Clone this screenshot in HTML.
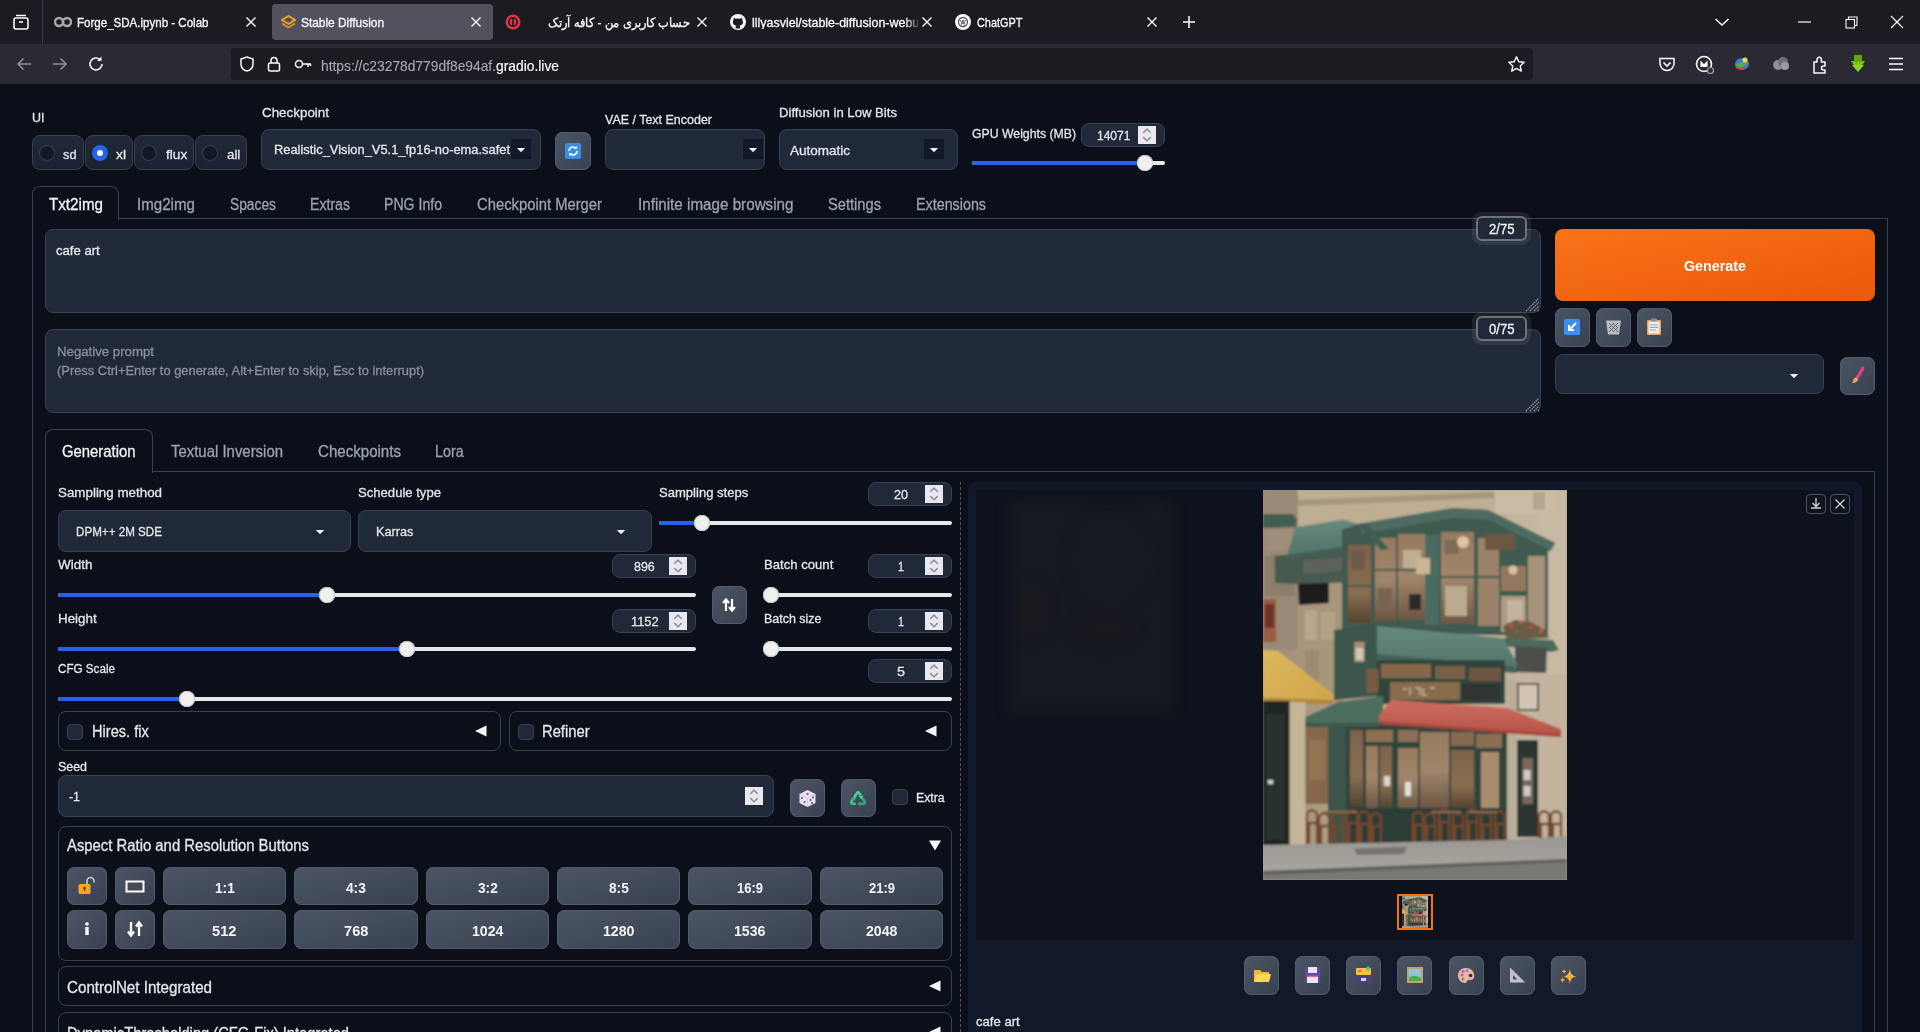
<!DOCTYPE html>
<html><head><meta charset="utf-8"><title>Stable Diffusion</title>
<style>
html,body{margin:0;padding:0;width:1920px;height:1032px;overflow:hidden;background:#0b0f19;font-family:'Liberation Sans', sans-serif;}
body{position:relative;}
</style></head><body>
<div style="position:absolute;left:0px;top:0px;width:1920px;height:44px;background:#1c1b22;border-radius:0px;box-sizing:border-box;"></div>
<div style="position:absolute;left:42px;top:0px;width:1px;height:44px;background:#3b3a42;border-radius:0px;box-sizing:border-box;"></div>
<div style="position:absolute;left:0px;top:44px;width:1920px;height:40px;background:#2b2a33;border-radius:0px;box-sizing:border-box;"></div>
<div style="position:absolute;left:272px;top:4px;width:221px;height:36px;background:#52525e;border-radius:4px;box-sizing:border-box;"></div>
<svg style="position:absolute;left:12px;top:13px;" width="18" height="18" viewBox="0 0 18 18"><rect x="2" y="5" width="14" height="11" rx="2" fill="none" stroke="#fbfbfe" stroke-width="1.6"/><path d="M4 2.5h10" stroke="#fbfbfe" stroke-width="1.5"/><path d="M7 9h4" stroke="#fbfbfe" stroke-width="1.6"/></svg>
<svg style="position:absolute;left:54px;top:15px;" width="18" height="14" viewBox="0 0 18 14"><circle cx="5" cy="7" r="4" fill="none" stroke="#a8a8ad" stroke-width="2.4"/><circle cx="13" cy="7" r="4" fill="none" stroke="#a8a8ad" stroke-width="2.4"/></svg>
<span id="t0" style="left:76.50px;position:absolute;top:16.08px;font-size:13.37px;line-height:1;white-space:nowrap;color:#fbfbfe;-webkit-text-stroke:0.3px #fbfbfe;font-weight:400;font-family:'Liberation Sans', sans-serif;transform:scaleX(0.8638);transform-origin:0 0;">Forge_SDA.ipynb - Colab</span>
<svg style="position:absolute;left:245px;top:16px;" width="12" height="12" viewBox="0 0 12 12"><path d="M1.5 1.5l9 9M10.5 1.5l-9 9" stroke="#fbfbfe" stroke-width="1.4"/></svg>
<svg style="position:absolute;left:281px;top:15px;" width="15" height="14" viewBox="0 0 15 14"><path d="M7.5 1L14 5 7.5 9 1 5z" fill="none" stroke="#f5a623" stroke-width="1.8"/><path d="M1 8.5L7.5 12.5 14 8.5" fill="none" stroke="#f08a24" stroke-width="1.8"/></svg>
<span id="t1" style="left:301.00px;position:absolute;top:16.08px;font-size:13.37px;line-height:1;white-space:nowrap;color:#fbfbfe;-webkit-text-stroke:0.3px #fbfbfe;font-weight:400;font-family:'Liberation Sans', sans-serif;transform:scaleX(0.8893);transform-origin:0 0;">Stable Diffusion</span>
<svg style="position:absolute;left:470px;top:16px;" width="12" height="12" viewBox="0 0 12 12"><path d="M1.5 1.5l9 9M10.5 1.5l-9 9" stroke="#fbfbfe" stroke-width="1.4"/></svg>
<svg style="position:absolute;left:505px;top:14px;" width="16" height="16" viewBox="0 0 16 16"><circle cx="8" cy="8" r="7.5" fill="#e0334a"/><circle cx="8" cy="8" r="4.2" fill="none" stroke="#1c1b22" stroke-width="1.6"/><path d="M8 3.8v8.4" stroke="#1c1b22" stroke-width="1.6"/></svg>
<span id="t2" style="left:548.00px;position:absolute;top:16.08px;font-size:13.37px;line-height:1;white-space:nowrap;color:#fbfbfe;-webkit-text-stroke:0.3px #fbfbfe;font-weight:400;font-family:'Liberation Sans', sans-serif;transform:scaleX(0.8765);transform-origin:0 0;">حساب کاربری من - کافه آرتک</span>
<svg style="position:absolute;left:696px;top:16px;" width="12" height="12" viewBox="0 0 12 12"><path d="M1.5 1.5l9 9M10.5 1.5l-9 9" stroke="#fbfbfe" stroke-width="1.4"/></svg>
<svg style="position:absolute;left:730px;top:14px;" width="16" height="16" viewBox="0 0 16 16"><circle cx="8" cy="8" r="8" fill="#fbfbfe"/><path d="M5.6 14.6c0-1.5.1-2.3.8-2.9-2.2-.3-3.6-1.2-3.6-3.6 0-.8.3-1.5.8-2.1-.1-.3-.3-1.1.1-2.1 0 0 .7-.2 2.2.8a7 7 0 0 1 4 0c1.5-1 2.2-.8 2.2-.8.4 1 .2 1.8.1 2.1.5.6.8 1.3.8 2.1 0 2.4-1.4 3.3-3.6 3.6.7.6.8 1.4.8 2.9" fill="#1c1b22"/></svg>
<span id="t3" style="left:751.70px;position:absolute;top:16.08px;font-size:13.37px;line-height:1;white-space:nowrap;color:#fbfbfe;-webkit-text-stroke:0.3px #fbfbfe;font-weight:400;font-family:'Liberation Sans', sans-serif;-webkit-mask-image:linear-gradient(to right,#000 90%,transparent);transform:scaleX(0.9319);transform-origin:0 0;">lllyasviel/stable-diffusion-webui</span>
<div style="position:absolute;left:918px;top:8px;width:22px;height:28px;background:#1c1b22;border-radius:0px;box-sizing:border-box;"></div>
<svg style="position:absolute;left:921px;top:16px;" width="12" height="12" viewBox="0 0 12 12"><path d="M1.5 1.5l9 9M10.5 1.5l-9 9" stroke="#fbfbfe" stroke-width="1.4"/></svg>
<svg style="position:absolute;left:955px;top:14px;" width="16" height="16" viewBox="0 0 16 16"><circle cx="8" cy="8" r="8" fill="#fbfbfe"/><circle cx="8" cy="8" r="4.5" fill="none" stroke="#555" stroke-width="1.3"/><path d="M5 6l3 4 3-4M6 11l2-5 2 5" stroke="#555" stroke-width="0.9" fill="none"/></svg>
<span id="t4" style="left:976.70px;position:absolute;top:16.08px;font-size:13.37px;line-height:1;white-space:nowrap;color:#fbfbfe;-webkit-text-stroke:0.3px #fbfbfe;font-weight:400;font-family:'Liberation Sans', sans-serif;transform:scaleX(0.8135);transform-origin:0 0;">ChatGPT</span>
<svg style="position:absolute;left:1146px;top:16px;" width="12" height="12" viewBox="0 0 12 12"><path d="M1.5 1.5l9 9M10.5 1.5l-9 9" stroke="#fbfbfe" stroke-width="1.4"/></svg>
<svg style="position:absolute;left:1182px;top:15px;" width="14" height="14" viewBox="0 0 14 14"><path d="M7 1v12M1 7h12" stroke="#fbfbfe" stroke-width="1.5"/></svg>
<svg style="position:absolute;left:1714px;top:17px;" width="16" height="10" viewBox="0 0 16 10"><path d="M1.5 2l6.5 6 6.5-6" fill="none" stroke="#fbfbfe" stroke-width="1.5"/></svg>
<svg style="position:absolute;left:1798px;top:20px;" width="14" height="4" viewBox="0 0 14 4"><path d="M0 2h13" stroke="#fbfbfe" stroke-width="1.2"/></svg>
<svg style="position:absolute;left:1845px;top:16px;" width="13" height="13" viewBox="0 0 13 13"><rect x="1" y="3.5" width="8.5" height="8.5" fill="none" stroke="#fbfbfe" stroke-width="1.1"/><path d="M3.5 3.5V1h8.5v8.5H9.5" fill="none" stroke="#fbfbfe" stroke-width="1.1"/></svg>
<svg style="position:absolute;left:1890px;top:15px;" width="14" height="14" viewBox="0 0 14 14"><path d="M1 1l12 12M13 1L1 13" stroke="#fbfbfe" stroke-width="1.2"/></svg>
<svg style="position:absolute;left:15px;top:55px;" width="18" height="18" viewBox="0 0 18 18"><path d="M16 9H3M8.5 3.5L3 9l5.5 5.5" fill="none" stroke="#8f8f9d" stroke-width="1.6"/></svg>
<svg style="position:absolute;left:51px;top:55px;" width="18" height="18" viewBox="0 0 18 18"><path d="M2 9h13M9.5 3.5L15 9l-5.5 5.5" fill="none" stroke="#8f8f9d" stroke-width="1.6"/></svg>
<svg style="position:absolute;left:87px;top:55px;" width="18" height="18" viewBox="0 0 18 18"><path d="M15 9a6 6 0 1 1-2-4.5" fill="none" stroke="#fbfbfe" stroke-width="1.6"/><path d="M14.5 1.5v4.5h-4.5z" fill="#fbfbfe"/></svg>
<div style="position:absolute;left:231px;top:48px;width:1302px;height:32px;background:#1c1b22;border-radius:4px;box-sizing:border-box;"></div>
<svg style="position:absolute;left:238px;top:55px;" width="18" height="18" viewBox="0 0 18 18"><path d="M9 2L3 4v5c0 3.5 2.6 6.2 6 7 3.4-.8 6-3.5 6-7V4z" fill="none" stroke="#fbfbfe" stroke-width="1.5"/></svg>
<svg style="position:absolute;left:266px;top:55px;" width="16" height="18" viewBox="0 0 16 18"><rect x="2.5" y="8" width="11" height="8" rx="1.5" fill="none" stroke="#fbfbfe" stroke-width="1.5"/><path d="M5 8V5.5a3 3 0 0 1 6 0V8" fill="none" stroke="#fbfbfe" stroke-width="1.5"/></svg>
<svg style="position:absolute;left:294px;top:57px;" width="18" height="14" viewBox="0 0 18 14"><circle cx="5" cy="7" r="3.5" fill="none" stroke="#fbfbfe" stroke-width="1.5"/><path d="M8.5 7H17M14 7v3M16.5 7v2" fill="none" stroke="#fbfbfe" stroke-width="1.5"/></svg>
<span id="t5" style="left:321.00px;position:absolute;top:59.02px;font-size:14.39px;line-height:1;white-space:nowrap;color:#a9a9b1;-webkit-text-stroke:0.3px #a9a9b1;font-weight:400;font-family:'Liberation Sans', sans-serif;-webkit-text-stroke:0.1px #a9a9b1;transform:scaleX(0.9605);transform-origin:0 0;">https://c23278d779df8e94af.<span style="color:#fbfbfe;-webkit-text-stroke:0.15px #fbfbfe">gradio.live</span></span>
<svg style="position:absolute;left:1507px;top:55px;" width="19" height="19" viewBox="0 0 19 19"><path d="M9.5 1.8l2.3 4.9 5.3.6-3.9 3.6 1.1 5.2-4.8-2.7-4.8 2.7 1.1-5.2L1.9 7.3l5.3-.6z" fill="none" stroke="#fbfbfe" stroke-width="1.4" stroke-linejoin="round"/></svg>
<svg style="position:absolute;left:1658px;top:55px;" width="18" height="18" viewBox="0 0 18 18"><path d="M2 3.5h14v5a7 7 0 0 1-14 0z" fill="none" stroke="#fbfbfe" stroke-width="1.5"/><path d="M5.5 7.5L9 11l3.5-3.5" fill="none" stroke="#fbfbfe" stroke-width="1.6"/></svg>
<svg style="position:absolute;left:1695px;top:55px;" width="20" height="20" viewBox="0 0 20 20"><circle cx="9" cy="9" r="7.5" fill="none" stroke="#fbfbfe" stroke-width="1.6"/><path d="M6 12V7l3 3 3-3v5" fill="#fbfbfe" stroke="#fbfbfe" stroke-width="1.2"/><circle cx="15.5" cy="15.5" r="3" fill="#2b2a33" stroke="#a0a0a8" stroke-width="1.2"/></svg>
<svg style="position:absolute;left:1732px;top:55px;" width="20" height="18" viewBox="0 0 20 18"><ellipse cx="10" cy="9" rx="7" ry="6" fill="#3a7bd5"/><path d="M3 11c3-4 8-5 14-3-3 1-6 3-8 7z" fill="#4caf50"/><path d="M4 12c2 2 6 2 9 0" stroke="#e53935" stroke-width="2" fill="none"/><circle cx="13" cy="5" r="2.5" fill="#ffd54f"/></svg>
<svg style="position:absolute;left:1771px;top:55px;" width="20" height="18" viewBox="0 0 20 18"><circle cx="7" cy="10" r="5" fill="#8d8d95"/><circle cx="12" cy="7" r="5" fill="#6f6f78"/><circle cx="14" cy="11" r="4" fill="#9a9aa2"/></svg>
<svg style="position:absolute;left:1811px;top:55px;" width="18" height="19" viewBox="0 0 18 19"><path d="M3 7h3V4.5a2.2 2.2 0 0 1 4.4 0V7H14v4h-1.5a2 2 0 0 0 0 4H14v3H3z" fill="none" stroke="#fbfbfe" stroke-width="1.5" stroke-linejoin="round"/></svg>
<svg style="position:absolute;left:1848px;top:54px;" width="20" height="20" viewBox="0 0 20 20"><path d="M3 7h14l-7 10z" fill="#7cc419"/><path d="M6 1h8v7H6z" fill="#5ea80f"/><path d="M4 11h12l-6 7z" fill="#8fd42a"/></svg>
<svg style="position:absolute;left:1887px;top:56px;" width="18" height="16" viewBox="0 0 18 16"><path d="M2 2.5h14M2 8h14M2 13.5h14" stroke="#fbfbfe" stroke-width="1.6"/></svg>
<span id="t6" style="left:32.00px;position:absolute;top:110.96px;font-size:13.52px;line-height:1;white-space:nowrap;color:#e5e7eb;-webkit-text-stroke:0.3px #e5e7eb;font-weight:400;font-family:'Liberation Sans', sans-serif;transform:scaleX(0.9238);transform-origin:0 0;">UI</span>
<div style="position:absolute;left:32px;top:135px;width:52px;height:35px;background:linear-gradient(#1f2937,#1a2230);border:1px solid #374151;border-radius:8px;box-sizing:border-box;"></div>
<div style="position:absolute;left:39px;top:145px;width:16px;height:16px;border-radius:50%;background:#111827;box-shadow:inset 0 0 0 1px #374151;box-sizing:border-box;"></div>
<span id="t7" style="left:63.00px;position:absolute;top:148.14px;font-size:13.66px;line-height:1;white-space:nowrap;color:#e5e7eb;-webkit-text-stroke:0.3px #e5e7eb;font-weight:400;font-family:'Liberation Sans', sans-serif;transform:scaleX(0.9351);transform-origin:0 0;">sd</span>
<div style="position:absolute;left:85px;top:135px;width:48px;height:35px;background:linear-gradient(#1f2937,#1a2230);border:1px solid #374151;border-radius:8px;box-sizing:border-box;"></div>
<div style="position:absolute;left:92px;top:145px;width:16px;height:16px;border-radius:50%;background:#2563eb;"></div>
<div style="position:absolute;left:97px;top:150px;width:6px;height:6px;border-radius:50%;background:#fff;"></div>
<span id="t8" style="left:115.80px;position:absolute;top:148.14px;font-size:13.66px;line-height:1;white-space:nowrap;color:#e5e7eb;-webkit-text-stroke:0.3px #e5e7eb;font-weight:400;font-family:'Liberation Sans', sans-serif;transform:scaleX(1.0127);transform-origin:0 0;">xl</span>
<div style="position:absolute;left:134px;top:135px;width:60px;height:35px;background:linear-gradient(#1f2937,#1a2230);border:1px solid #374151;border-radius:8px;box-sizing:border-box;"></div>
<div style="position:absolute;left:141px;top:145px;width:16px;height:16px;border-radius:50%;background:#111827;box-shadow:inset 0 0 0 1px #374151;box-sizing:border-box;"></div>
<span id="t9" style="left:165.50px;position:absolute;top:148.14px;font-size:13.66px;line-height:1;white-space:nowrap;color:#e5e7eb;-webkit-text-stroke:0.3px #e5e7eb;font-weight:400;font-family:'Liberation Sans', sans-serif;transform:scaleX(0.9969);transform-origin:0 0;">flux</span>
<div style="position:absolute;left:195px;top:135px;width:52px;height:35px;background:linear-gradient(#1f2937,#1a2230);border:1px solid #374151;border-radius:8px;box-sizing:border-box;"></div>
<div style="position:absolute;left:202px;top:145px;width:16px;height:16px;border-radius:50%;background:#111827;box-shadow:inset 0 0 0 1px #374151;box-sizing:border-box;"></div>
<span id="t10" style="left:226.70px;position:absolute;top:148.14px;font-size:13.66px;line-height:1;white-space:nowrap;color:#e5e7eb;-webkit-text-stroke:0.3px #e5e7eb;font-weight:400;font-family:'Liberation Sans', sans-serif;transform:scaleX(0.9728);transform-origin:0 0;">all</span>
<span id="t11" style="left:261.50px;position:absolute;top:105.64px;font-size:13.66px;line-height:1;white-space:nowrap;color:#e5e7eb;-webkit-text-stroke:0.3px #e5e7eb;font-weight:400;font-family:'Liberation Sans', sans-serif;transform:scaleX(0.9806);transform-origin:0 0;">Checkpoint</span>
<div style="position:absolute;left:261px;top:129px;width:280px;height:41px;background:#1f2937;border:1px solid #374151;border-radius:8px;box-sizing:border-box;"></div>
<div style="position:absolute;left:274px;top:129px;width:237px;height:41px;overflow:hidden;">
<span id="t12" style="left:0.00px;position:absolute;top:14.14px;font-size:13.66px;line-height:1;white-space:nowrap;color:#e5e7eb;-webkit-text-stroke:0.3px #e5e7eb;font-weight:400;font-family:'Liberation Sans', sans-serif;transform:scaleX(0.9430);transform-origin:0 0;">Realistic_Vision_V5.1_fp16-no-ema.safet</span>
</div>
<div style="position:absolute;left:511px;top:139px;width:20px;height:20px;background:#111827;border-radius:0px;box-sizing:border-box;"></div>
<svg style="position:absolute;left:515px;top:146px;" width="12" height="6" viewBox="0 0 12 6"><path d="M1.8 2h8.4L6 6.2z" fill="#f3f4f6"/></svg>
<div style="position:absolute;left:555px;top:132px;width:36px;height:38px;background:linear-gradient(to bottom right,#4b5563,#374151);border-radius:8px;box-sizing:border-box;box-shadow:inset 0 0 0 1px #525b69;"></div>
<svg style="position:absolute;left:565px;top:143px;" width="16" height="16" viewBox="0 0 16 16"><rect width="16" height="16" rx="2" fill="#3b8ee8"/><path d="M4 8a4 4 0 0 1 7-2.6M12 8a4 4 0 0 1-7 2.6" fill="none" stroke="#fff" stroke-width="1.6"/><path d="M11.8 3v3h-3zM4.2 13v-3h3z" fill="#fff"/></svg>
<span id="t13" style="left:604.60px;position:absolute;top:113.14px;font-size:13.66px;line-height:1;white-space:nowrap;color:#e5e7eb;-webkit-text-stroke:0.3px #e5e7eb;font-weight:400;font-family:'Liberation Sans', sans-serif;transform:scaleX(0.9133);transform-origin:0 0;">VAE / Text Encoder</span>
<div style="position:absolute;left:605px;top:129px;width:160px;height:41px;background:#1f2937;border:1px solid #374151;border-radius:8px;box-sizing:border-box;"></div>
<div style="position:absolute;left:743px;top:139px;width:20px;height:20px;background:#111827;border-radius:0px;box-sizing:border-box;"></div>
<svg style="position:absolute;left:747px;top:146px;" width="12" height="6" viewBox="0 0 12 6"><path d="M1.8 2h8.4L6 6.2z" fill="#f3f4f6"/></svg>
<span id="t14" style="left:779.00px;position:absolute;top:105.64px;font-size:13.66px;line-height:1;white-space:nowrap;color:#e5e7eb;-webkit-text-stroke:0.3px #e5e7eb;font-weight:400;font-family:'Liberation Sans', sans-serif;transform:scaleX(0.9615);transform-origin:0 0;">Diffusion in Low Bits</span>
<div style="position:absolute;left:779px;top:129px;width:179px;height:41px;background:#1f2937;border:1px solid #374151;border-radius:8px;box-sizing:border-box;"></div>
<span id="t15" style="left:789.60px;position:absolute;top:143.64px;font-size:13.66px;line-height:1;white-space:nowrap;color:#e5e7eb;-webkit-text-stroke:0.3px #e5e7eb;font-weight:400;font-family:'Liberation Sans', sans-serif;transform:scaleX(0.9879);transform-origin:0 0;">Automatic</span>
<div style="position:absolute;left:924px;top:139px;width:20px;height:20px;background:#111827;border-radius:0px;box-sizing:border-box;"></div>
<svg style="position:absolute;left:928px;top:146px;" width="12" height="6" viewBox="0 0 12 6"><path d="M1.8 2h8.4L6 6.2z" fill="#f3f4f6"/></svg>
<span id="t16" style="left:971.90px;position:absolute;top:126.64px;font-size:13.66px;line-height:1;white-space:nowrap;color:#e5e7eb;-webkit-text-stroke:0.3px #e5e7eb;font-weight:400;font-family:'Liberation Sans', sans-serif;transform:scaleX(0.8976);transform-origin:0 0;">GPU Weights (MB)</span>
<div style="position:absolute;left:1081px;top:123px;width:84px;height:24px;background:#1f2937;border:1px solid #374151;border-radius:8px;box-sizing:border-box;"></div>
<div style="position:absolute;left:1138px;top:126px;width:18px;height:18px;background:#e9e8ed;border-radius:0px;box-sizing:border-box;"></div>
<svg style="position:absolute;left:1138px;top:126px;" width="18" height="18" viewBox="0 0 18 18"><path d="M5.3 6.8L9 3.1l3.7 3.7M5.3 11.1L9 14.8l3.7-3.7" fill="none" stroke="#8f8f9d" stroke-width="1.5"/></svg>
<span id="t17" style="left:1097.00px;position:absolute;top:129.65px;font-size:12.94px;line-height:1;white-space:nowrap;color:#e5e7eb;-webkit-text-stroke:0.3px #e5e7eb;font-weight:400;font-family:'Liberation Sans', sans-serif;transform:scaleX(0.9282);transform-origin:0 0;">14071</span>
<div style="position:absolute;left:972px;top:160.7px;width:193px;height:4.5px;background:#e5e7eb;border-radius:3px;box-sizing:border-box;"></div>
<div style="position:absolute;left:972px;top:160.7px;width:173px;height:4.5px;background:#2563eb;border-radius:3px;box-sizing:border-box;"></div>
<div style="position:absolute;left:1137px;top:155px;width:16px;height:16px;border-radius:50%;background:#f0f0f0;box-shadow:0 0 0 1px #c9c9c9 inset;"></div>
<div style="position:absolute;left:32px;top:218px;width:1856px;height:882px;background:transparent;border:1px solid #374151;border-radius:0px;box-sizing:border-box;"></div>
<div style="position:absolute;left:32px;top:186px;width:87px;height:34px;background:#0b0f19;border:1px solid #374151;border-radius:0px;box-sizing:border-box;border-bottom:none;border-radius:8px 8px 0 0;"></div>
<span id="t18" style="left:49.00px;position:absolute;top:196.0px;font-size:16.42px;line-height:1;white-space:nowrap;color:#f3f4f6;-webkit-text-stroke:0.3px #f3f4f6;font-weight:400;font-family:'Liberation Sans', sans-serif;transform:scaleX(0.9255);transform-origin:0 0;">Txt2img</span>
<span id="t19" style="left:136.70px;position:absolute;top:196.0px;font-size:16.42px;line-height:1;white-space:nowrap;color:#9ca3af;-webkit-text-stroke:0.3px #9ca3af;font-weight:400;font-family:'Liberation Sans', sans-serif;transform:scaleX(0.9218);transform-origin:0 0;">Img2img</span>
<span id="t20" style="left:229.70px;position:absolute;top:196.0px;font-size:16.42px;line-height:1;white-space:nowrap;color:#9ca3af;-webkit-text-stroke:0.3px #9ca3af;font-weight:400;font-family:'Liberation Sans', sans-serif;transform:scaleX(0.8404);transform-origin:0 0;">Spaces</span>
<span id="t21" style="left:310.00px;position:absolute;top:196.0px;font-size:16.42px;line-height:1;white-space:nowrap;color:#9ca3af;-webkit-text-stroke:0.3px #9ca3af;font-weight:400;font-family:'Liberation Sans', sans-serif;transform:scaleX(0.8602);transform-origin:0 0;">Extras</span>
<span id="t22" style="left:384.00px;position:absolute;top:196.0px;font-size:16.42px;line-height:1;white-space:nowrap;color:#9ca3af;-webkit-text-stroke:0.3px #9ca3af;font-weight:400;font-family:'Liberation Sans', sans-serif;transform:scaleX(0.8595);transform-origin:0 0;">PNG Info</span>
<span id="t23" style="left:477.00px;position:absolute;top:196.0px;font-size:16.42px;line-height:1;white-space:nowrap;color:#9ca3af;-webkit-text-stroke:0.3px #9ca3af;font-weight:400;font-family:'Liberation Sans', sans-serif;transform:scaleX(0.9018);transform-origin:0 0;">Checkpoint Merger</span>
<span id="t24" style="left:637.50px;position:absolute;top:196.0px;font-size:16.42px;line-height:1;white-space:nowrap;color:#9ca3af;-webkit-text-stroke:0.3px #9ca3af;font-weight:400;font-family:'Liberation Sans', sans-serif;transform:scaleX(0.9267);transform-origin:0 0;">Infinite image browsing</span>
<span id="t25" style="left:828.00px;position:absolute;top:196.0px;font-size:16.42px;line-height:1;white-space:nowrap;color:#9ca3af;-webkit-text-stroke:0.3px #9ca3af;font-weight:400;font-family:'Liberation Sans', sans-serif;transform:scaleX(0.8940);transform-origin:0 0;">Settings</span>
<span id="t26" style="left:916.00px;position:absolute;top:196.0px;font-size:16.42px;line-height:1;white-space:nowrap;color:#9ca3af;-webkit-text-stroke:0.3px #9ca3af;font-weight:400;font-family:'Liberation Sans', sans-serif;transform:scaleX(0.8721);transform-origin:0 0;">Extensions</span>
<div style="position:absolute;left:45px;top:229px;width:1496px;height:84px;background:#1f2937;border:1px solid #374151;border-radius:8px;box-sizing:border-box;"></div>
<span id="t27" style="left:56.10px;position:absolute;top:244.95px;font-size:12.94px;line-height:1;white-space:nowrap;color:#e5e7eb;-webkit-text-stroke:0.3px #e5e7eb;font-weight:400;font-family:'Liberation Sans', sans-serif;transform:scaleX(1.0126);transform-origin:0 0;">cafe art</span>
<div style="position:absolute;left:45px;top:329px;width:1496px;height:84px;background:#1f2937;border:1px solid #374151;border-radius:8px;box-sizing:border-box;"></div>
<span id="t28" style="left:56.70px;position:absolute;top:344.54px;font-size:13.66px;line-height:1;white-space:nowrap;color:#8b919b;-webkit-text-stroke:0.3px #8b919b;font-weight:400;font-family:'Liberation Sans', sans-serif;transform:scaleX(0.9680);transform-origin:0 0;">Negative prompt</span>
<span id="t29" style="left:56.70px;position:absolute;top:363.94px;font-size:13.66px;line-height:1;white-space:nowrap;color:#8b919b;-webkit-text-stroke:0.3px #8b919b;font-weight:400;font-family:'Liberation Sans', sans-serif;transform:scaleX(0.9444);transform-origin:0 0;">(Press Ctrl+Enter to generate, Alt+Enter to skip, Esc to interrupt)</span>
<svg style="position:absolute;left:1525px;top:296px;" width="16" height="16" viewBox="0 0 16 16"><path d="M1 15L14 2M5 15L14 6M9 15L14 10M13 15L14 14" stroke="#a3a9b3" stroke-width="1.1" stroke-dasharray="1.4 0.9"/></svg>
<svg style="position:absolute;left:1525px;top:396px;" width="16" height="16" viewBox="0 0 16 16"><path d="M1 15L14 2M5 15L14 6M9 15L14 10M13 15L14 14" stroke="#a3a9b3" stroke-width="1.1" stroke-dasharray="1.4 0.9"/></svg>
<div style="position:absolute;left:1472px;top:212px;width:59px;height:33px;background:#ffffff14;border-radius:9px;box-sizing:border-box;"></div>
<div style="position:absolute;left:1476px;top:216px;width:51px;height:25px;background:#1f2937;border:2px solid #6f737a;border-radius:6px;box-sizing:border-box;"></div>
<span id="t30" style="left:1488.70px;position:absolute;top:223.29px;font-size:13.95px;line-height:1;white-space:nowrap;color:#f3f4f6;-webkit-text-stroke:0.3px #f3f4f6;font-weight:400;font-family:'Liberation Sans', sans-serif;transform:scaleX(0.9432);transform-origin:0 0;">2/75</span>
<div style="position:absolute;left:1472px;top:312px;width:59px;height:33px;background:#ffffff14;border-radius:9px;box-sizing:border-box;"></div>
<div style="position:absolute;left:1476px;top:316px;width:51px;height:25px;background:#1f2937;border:2px solid #6f737a;border-radius:6px;box-sizing:border-box;"></div>
<span id="t31" style="left:1488.70px;position:absolute;top:323.29px;font-size:13.95px;line-height:1;white-space:nowrap;color:#f3f4f6;-webkit-text-stroke:0.3px #f3f4f6;font-weight:400;font-family:'Liberation Sans', sans-serif;transform:scaleX(0.9432);transform-origin:0 0;">0/75</span>
<div style="position:absolute;left:1555px;top:229px;width:320px;height:72px;background:linear-gradient(to bottom right,#f97316,#ea580c);border-radius:8px;box-sizing:border-box;"></div>
<span id="t32" style="left:1683.90px;position:absolute;top:258.26px;font-size:15.41px;line-height:1;white-space:nowrap;color:#ffffff;-webkit-text-stroke:0px #ffffff;font-weight:700;font-family:'Liberation Sans', sans-serif;transform:scaleX(0.9282);transform-origin:0 0;">Generate</span>
<div style="position:absolute;left:1555px;top:308px;width:35px;height:39px;background:linear-gradient(to bottom right,#4b5563,#374151);border-radius:8px;box-sizing:border-box;box-shadow:inset 0 0 0 1px #525b69;"></div>
<svg style="position:absolute;left:1564px;top:319px;" width="16" height="16" viewBox="0 0 16 16"><rect width="16" height="16" rx="1.5" fill="#3d8ef0"/><path d="M12 4L5 11M5 6v5h5" fill="none" stroke="#fff" stroke-width="2"/></svg>
<div style="position:absolute;left:1596px;top:308px;width:35px;height:39px;background:linear-gradient(to bottom right,#4b5563,#374151);border-radius:8px;box-sizing:border-box;box-shadow:inset 0 0 0 1px #525b69;"></div>
<svg style="position:absolute;left:1605px;top:319px;" width="17" height="16" viewBox="0 0 17 16"><path d="M1 1.5h15l-2 14H3z" fill="#b9bcc2"/><path d="M4 4l9 9M8 4l5 5M4 8l5 5M13 4l-9 9M9 4l-5 5M13 8l-5 5" stroke="#5a5f68" stroke-width="0.9"/></svg>
<div style="position:absolute;left:1637px;top:308px;width:35px;height:39px;background:linear-gradient(to bottom right,#4b5563,#374151);border-radius:8px;box-sizing:border-box;box-shadow:inset 0 0 0 1px #525b69;"></div>
<svg style="position:absolute;left:1646px;top:318px;" width="16" height="17" viewBox="0 0 16 17"><rect x="1" y="2" width="14" height="15" rx="1" fill="#e6a25a"/><rect x="2.5" y="3.5" width="11" height="12" fill="#eceef1"/><rect x="5" y="0.5" width="6" height="3" rx="1" fill="#8a8f98"/><path d="M4 7h8M4 9.5h8M4 12h6" stroke="#9aa0a8" stroke-width="1"/></svg>
<div style="position:absolute;left:1555px;top:354px;width:269px;height:40px;background:#1f2937;border:1px solid #374151;border-radius:8px;box-sizing:border-box;"></div>
<svg style="position:absolute;left:1788px;top:372px;" width="12" height="6" viewBox="0 0 12 6"><path d="M1.8 2h8.4L6 6.2z" fill="#f3f4f6"/></svg>
<div style="position:absolute;left:1840px;top:357px;width:35px;height:38px;background:linear-gradient(to bottom right,#4b5563,#374151);border-radius:8px;box-sizing:border-box;box-shadow:inset 0 0 0 1px #525b69;"></div>
<svg style="position:absolute;left:1849px;top:366px;" width="18" height="20" viewBox="0 0 18 20"><path d="M14 2L8 12" stroke="#e8408a" stroke-width="3" stroke-linecap="round"/><path d="M7.5 11.5c-2 0-3.5 1.5-3.5 4l-1 1.5c3 .5 5.5-1 6-3.5z" fill="#f4a25a"/></svg>
<div style="position:absolute;left:45px;top:471px;width:1830px;height:629px;background:transparent;border:1px solid #374151;border-radius:0px;box-sizing:border-box;"></div>
<div style="position:absolute;left:45px;top:429px;width:108px;height:44px;background:#0b0f19;border:1px solid #374151;border-radius:0px;box-sizing:border-box;border-bottom:none;border-radius:8px 8px 0 0;"></div>
<span id="t33" style="left:62.30px;position:absolute;top:444.16px;font-size:15.99px;line-height:1;white-space:nowrap;color:#f3f4f6;-webkit-text-stroke:0.3px #f3f4f6;font-weight:400;font-family:'Liberation Sans', sans-serif;transform:scaleX(0.9293);transform-origin:0 0;">Generation</span>
<span id="t34" style="left:171.00px;position:absolute;top:444.16px;font-size:15.99px;line-height:1;white-space:nowrap;color:#9ca3af;-webkit-text-stroke:0.3px #9ca3af;font-weight:400;font-family:'Liberation Sans', sans-serif;transform:scaleX(0.9337);transform-origin:0 0;">Textual Inversion</span>
<span id="t35" style="left:317.70px;position:absolute;top:444.16px;font-size:15.99px;line-height:1;white-space:nowrap;color:#9ca3af;-webkit-text-stroke:0.3px #9ca3af;font-weight:400;font-family:'Liberation Sans', sans-serif;transform:scaleX(0.9435);transform-origin:0 0;">Checkpoints</span>
<span id="t36" style="left:435.40px;position:absolute;top:444.16px;font-size:15.99px;line-height:1;white-space:nowrap;color:#9ca3af;-webkit-text-stroke:0.3px #9ca3af;font-weight:400;font-family:'Liberation Sans', sans-serif;transform:scaleX(0.8938);transform-origin:0 0;">Lora</span>
<span id="t37" style="left:58.10px;position:absolute;top:486.04px;font-size:13.66px;line-height:1;white-space:nowrap;color:#e5e7eb;-webkit-text-stroke:0.3px #e5e7eb;font-weight:400;font-family:'Liberation Sans', sans-serif;transform:scaleX(0.9785);transform-origin:0 0;">Sampling method</span>
<div style="position:absolute;left:58px;top:510px;width:293px;height:42px;background:#1f2937;border:1px solid #374151;border-radius:8px;box-sizing:border-box;"></div>
<span id="t38" style="left:75.60px;position:absolute;top:525.14px;font-size:13.66px;line-height:1;white-space:nowrap;color:#e5e7eb;-webkit-text-stroke:0.3px #e5e7eb;font-weight:400;font-family:'Liberation Sans', sans-serif;transform:scaleX(0.8520);transform-origin:0 0;">DPM++ 2M SDE</span>
<svg style="position:absolute;left:314px;top:528px;" width="12" height="6" viewBox="0 0 12 6"><path d="M1.8 2h8.4L6 6.2z" fill="#f3f4f6"/></svg>
<span id="t39" style="left:358.30px;position:absolute;top:486.04px;font-size:13.66px;line-height:1;white-space:nowrap;color:#e5e7eb;-webkit-text-stroke:0.3px #e5e7eb;font-weight:400;font-family:'Liberation Sans', sans-serif;transform:scaleX(0.9588);transform-origin:0 0;">Schedule type</span>
<div style="position:absolute;left:358px;top:510px;width:294px;height:42px;background:#1f2937;border:1px solid #374151;border-radius:8px;box-sizing:border-box;"></div>
<span id="t40" style="left:375.60px;position:absolute;top:525.14px;font-size:13.66px;line-height:1;white-space:nowrap;color:#e5e7eb;-webkit-text-stroke:0.3px #e5e7eb;font-weight:400;font-family:'Liberation Sans', sans-serif;transform:scaleX(0.9271);transform-origin:0 0;">Karras</span>
<svg style="position:absolute;left:615px;top:528px;" width="12" height="6" viewBox="0 0 12 6"><path d="M1.8 2h8.4L6 6.2z" fill="#f3f4f6"/></svg>
<span id="t41" style="left:658.80px;position:absolute;top:486.44px;font-size:13.66px;line-height:1;white-space:nowrap;color:#e5e7eb;-webkit-text-stroke:0.3px #e5e7eb;font-weight:400;font-family:'Liberation Sans', sans-serif;transform:scaleX(0.9564);transform-origin:0 0;">Sampling steps</span>
<div style="position:absolute;left:868px;top:482px;width:84px;height:24px;background:#1f2937;border:1px solid #374151;border-radius:8px;box-sizing:border-box;"></div>
<div style="position:absolute;left:925px;top:485px;width:18px;height:18px;background:#e9e8ed;border-radius:0px;box-sizing:border-box;"></div>
<svg style="position:absolute;left:925px;top:485px;" width="18" height="18" viewBox="0 0 18 18"><path d="M5.3 6.8L9 3.1l3.7 3.7M5.3 11.1L9 14.8l3.7-3.7" fill="none" stroke="#8f8f9d" stroke-width="1.5"/></svg>
<span id="t42" style="left:893.70px;position:absolute;top:488.65px;font-size:12.94px;line-height:1;white-space:nowrap;color:#e5e7eb;-webkit-text-stroke:0.3px #e5e7eb;font-weight:400;font-family:'Liberation Sans', sans-serif;transform:scaleX(0.9729);transform-origin:0 0;">20</span>
<div style="position:absolute;left:659px;top:520.7px;width:293px;height:4.5px;background:#e5e7eb;border-radius:3px;box-sizing:border-box;"></div>
<div style="position:absolute;left:659px;top:520.7px;width:43px;height:4.5px;background:#2563eb;border-radius:3px;box-sizing:border-box;"></div>
<div style="position:absolute;left:694px;top:515px;width:16px;height:16px;border-radius:50%;background:#f0f0f0;box-shadow:0 0 0 1px #c9c9c9 inset;"></div>
<span id="t43" style="left:58.30px;position:absolute;top:557.94px;font-size:13.66px;line-height:1;white-space:nowrap;color:#e5e7eb;-webkit-text-stroke:0.3px #e5e7eb;font-weight:400;font-family:'Liberation Sans', sans-serif;transform:scaleX(0.9851);transform-origin:0 0;">Width</span>
<div style="position:absolute;left:612px;top:554px;width:84px;height:24px;background:#1f2937;border:1px solid #374151;border-radius:8px;box-sizing:border-box;"></div>
<div style="position:absolute;left:669px;top:557px;width:18px;height:18px;background:#e9e8ed;border-radius:0px;box-sizing:border-box;"></div>
<svg style="position:absolute;left:669px;top:557px;" width="18" height="18" viewBox="0 0 18 18"><path d="M5.3 6.8L9 3.1l3.7 3.7M5.3 11.1L9 14.8l3.7-3.7" fill="none" stroke="#8f8f9d" stroke-width="1.5"/></svg>
<span id="t44" style="left:634.30px;position:absolute;top:560.65px;font-size:12.94px;line-height:1;white-space:nowrap;color:#e5e7eb;-webkit-text-stroke:0.3px #e5e7eb;font-weight:400;font-family:'Liberation Sans', sans-serif;transform:scaleX(0.9632);transform-origin:0 0;">896</span>
<div style="position:absolute;left:58px;top:592.7px;width:638px;height:4.5px;background:#e5e7eb;border-radius:3px;box-sizing:border-box;"></div>
<div style="position:absolute;left:58px;top:592.7px;width:269px;height:4.5px;background:#2563eb;border-radius:3px;box-sizing:border-box;"></div>
<div style="position:absolute;left:319px;top:587px;width:16px;height:16px;border-radius:50%;background:#f0f0f0;box-shadow:0 0 0 1px #c9c9c9 inset;"></div>
<span id="t45" style="left:58.30px;position:absolute;top:612.14px;font-size:13.66px;line-height:1;white-space:nowrap;color:#e5e7eb;-webkit-text-stroke:0.3px #e5e7eb;font-weight:400;font-family:'Liberation Sans', sans-serif;transform:scaleX(0.9801);transform-origin:0 0;">Height</span>
<div style="position:absolute;left:612px;top:609px;width:84px;height:24px;background:#1f2937;border:1px solid #374151;border-radius:8px;box-sizing:border-box;"></div>
<div style="position:absolute;left:669px;top:612px;width:18px;height:18px;background:#e9e8ed;border-radius:0px;box-sizing:border-box;"></div>
<svg style="position:absolute;left:669px;top:612px;" width="18" height="18" viewBox="0 0 18 18"><path d="M5.3 6.8L9 3.1l3.7 3.7M5.3 11.1L9 14.8l3.7-3.7" fill="none" stroke="#8f8f9d" stroke-width="1.5"/></svg>
<span id="t46" style="left:630.90px;position:absolute;top:615.65px;font-size:12.94px;line-height:1;white-space:nowrap;color:#e5e7eb;-webkit-text-stroke:0.3px #e5e7eb;font-weight:400;font-family:'Liberation Sans', sans-serif;transform:scaleX(0.9918);transform-origin:0 0;">1152</span>
<div style="position:absolute;left:58px;top:646.7px;width:638px;height:4.5px;background:#e5e7eb;border-radius:3px;box-sizing:border-box;"></div>
<div style="position:absolute;left:58px;top:646.7px;width:349px;height:4.5px;background:#2563eb;border-radius:3px;box-sizing:border-box;"></div>
<div style="position:absolute;left:399px;top:641px;width:16px;height:16px;border-radius:50%;background:#f0f0f0;box-shadow:0 0 0 1px #c9c9c9 inset;"></div>
<div style="position:absolute;left:712px;top:586px;width:35px;height:38px;background:linear-gradient(to bottom right,#4b5563,#374151);border-radius:8px;box-sizing:border-box;box-shadow:inset 0 0 0 1px #525b69;"></div>
<svg style="position:absolute;left:720px;top:596px;" width="18" height="18" viewBox="0 0 18 18"><path d="M6 15V4M3 7l3-3.5L9 7M12 3v11M9 11l3 3.5 3-3.5" fill="none" stroke="#fff" stroke-width="2.2"/></svg>
<span id="t47" style="left:763.70px;position:absolute;top:558.14px;font-size:13.66px;line-height:1;white-space:nowrap;color:#e5e7eb;-webkit-text-stroke:0.3px #e5e7eb;font-weight:400;font-family:'Liberation Sans', sans-serif;transform:scaleX(0.9608);transform-origin:0 0;">Batch count</span>
<div style="position:absolute;left:868px;top:554px;width:84px;height:24px;background:#1f2937;border:1px solid #374151;border-radius:8px;box-sizing:border-box;"></div>
<div style="position:absolute;left:925px;top:557px;width:18px;height:18px;background:#e9e8ed;border-radius:0px;box-sizing:border-box;"></div>
<svg style="position:absolute;left:925px;top:557px;" width="18" height="18" viewBox="0 0 18 18"><path d="M5.3 6.8L9 3.1l3.7 3.7M5.3 11.1L9 14.8l3.7-3.7" fill="none" stroke="#8f8f9d" stroke-width="1.5"/></svg>
<span id="t48" style="left:897.70px;position:absolute;top:560.65px;font-size:12.94px;line-height:1;white-space:nowrap;color:#e5e7eb;-webkit-text-stroke:0.3px #e5e7eb;font-weight:400;font-family:'Liberation Sans', sans-serif;transform:scaleX(0.8330);transform-origin:0 0;">1</span>
<div style="position:absolute;left:764px;top:592.7px;width:188px;height:4.5px;background:#e5e7eb;border-radius:3px;box-sizing:border-box;"></div>
<div style="position:absolute;left:764px;top:592.7px;width:7px;height:4.5px;background:#2563eb;border-radius:3px;box-sizing:border-box;"></div>
<div style="position:absolute;left:763px;top:587px;width:16px;height:16px;border-radius:50%;background:#f0f0f0;box-shadow:0 0 0 1px #c9c9c9 inset;"></div>
<span id="t49" style="left:763.70px;position:absolute;top:612.14px;font-size:13.66px;line-height:1;white-space:nowrap;color:#e5e7eb;-webkit-text-stroke:0.3px #e5e7eb;font-weight:400;font-family:'Liberation Sans', sans-serif;transform:scaleX(0.9125);transform-origin:0 0;">Batch size</span>
<div style="position:absolute;left:868px;top:609px;width:84px;height:24px;background:#1f2937;border:1px solid #374151;border-radius:8px;box-sizing:border-box;"></div>
<div style="position:absolute;left:925px;top:612px;width:18px;height:18px;background:#e9e8ed;border-radius:0px;box-sizing:border-box;"></div>
<svg style="position:absolute;left:925px;top:612px;" width="18" height="18" viewBox="0 0 18 18"><path d="M5.3 6.8L9 3.1l3.7 3.7M5.3 11.1L9 14.8l3.7-3.7" fill="none" stroke="#8f8f9d" stroke-width="1.5"/></svg>
<span id="t50" style="left:897.70px;position:absolute;top:615.65px;font-size:12.94px;line-height:1;white-space:nowrap;color:#e5e7eb;-webkit-text-stroke:0.3px #e5e7eb;font-weight:400;font-family:'Liberation Sans', sans-serif;transform:scaleX(0.8330);transform-origin:0 0;">1</span>
<div style="position:absolute;left:764px;top:646.7px;width:188px;height:4.5px;background:#e5e7eb;border-radius:3px;box-sizing:border-box;"></div>
<div style="position:absolute;left:764px;top:646.7px;width:7px;height:4.5px;background:#2563eb;border-radius:3px;box-sizing:border-box;"></div>
<div style="position:absolute;left:763px;top:641px;width:16px;height:16px;border-radius:50%;background:#f0f0f0;box-shadow:0 0 0 1px #c9c9c9 inset;"></div>
<span id="t51" style="left:58.30px;position:absolute;top:662.14px;font-size:13.66px;line-height:1;white-space:nowrap;color:#e5e7eb;-webkit-text-stroke:0.3px #e5e7eb;font-weight:400;font-family:'Liberation Sans', sans-serif;transform:scaleX(0.8535);transform-origin:0 0;">CFG Scale</span>
<div style="position:absolute;left:868px;top:659px;width:84px;height:24px;background:#1f2937;border:1px solid #374151;border-radius:8px;box-sizing:border-box;"></div>
<div style="position:absolute;left:925px;top:662px;width:18px;height:18px;background:#e9e8ed;border-radius:0px;box-sizing:border-box;"></div>
<svg style="position:absolute;left:925px;top:662px;" width="18" height="18" viewBox="0 0 18 18"><path d="M5.3 6.8L9 3.1l3.7 3.7M5.3 11.1L9 14.8l3.7-3.7" fill="none" stroke="#8f8f9d" stroke-width="1.5"/></svg>
<span id="t52" style="left:896.70px;position:absolute;top:665.65px;font-size:12.94px;line-height:1;white-space:nowrap;color:#e5e7eb;-webkit-text-stroke:0.3px #e5e7eb;font-weight:400;font-family:'Liberation Sans', sans-serif;transform:scaleX(1.1106);transform-origin:0 0;">5</span>
<div style="position:absolute;left:58px;top:696.7px;width:894px;height:4.5px;background:#e5e7eb;border-radius:3px;box-sizing:border-box;"></div>
<div style="position:absolute;left:58px;top:696.7px;width:129px;height:4.5px;background:#2563eb;border-radius:3px;box-sizing:border-box;"></div>
<div style="position:absolute;left:179px;top:691px;width:16px;height:16px;border-radius:50%;background:#f0f0f0;box-shadow:0 0 0 1px #c9c9c9 inset;"></div>
<div style="position:absolute;left:58px;top:711px;width:443px;height:40px;background:transparent;border:1px solid #374151;border-radius:8px;box-sizing:border-box;"></div>
<div style="position:absolute;left:67px;top:724px;width:16px;height:16px;background:#1f2937;border:1px solid #374151;border-radius:4px;box-sizing:border-box;"></div>
<span id="t53" style="left:91.70px;position:absolute;top:724.16px;font-size:15.99px;line-height:1;white-space:nowrap;color:#e5e7eb;-webkit-text-stroke:0.3px #e5e7eb;font-weight:400;font-family:'Liberation Sans', sans-serif;transform:scaleX(0.9136);transform-origin:0 0;">Hires. fix</span>
<svg style="position:absolute;left:474.5px;top:725px;" width="12" height="12" viewBox="0 0 12 12"><path d="M0 6L11.5 0.5v11z" fill="#f3f4f6"/></svg>
<div style="position:absolute;left:509px;top:711px;width:443px;height:40px;background:transparent;border:1px solid #374151;border-radius:8px;box-sizing:border-box;"></div>
<div style="position:absolute;left:518px;top:724px;width:16px;height:16px;background:#1f2937;border:1px solid #374151;border-radius:4px;box-sizing:border-box;"></div>
<span id="t54" style="left:542.00px;position:absolute;top:724.16px;font-size:15.99px;line-height:1;white-space:nowrap;color:#e5e7eb;-webkit-text-stroke:0.3px #e5e7eb;font-weight:400;font-family:'Liberation Sans', sans-serif;transform:scaleX(0.9237);transform-origin:0 0;">Refiner</span>
<svg style="position:absolute;left:925px;top:725px;" width="12" height="12" viewBox="0 0 12 12"><path d="M0 6L11.5 0.5v11z" fill="#f3f4f6"/></svg>
<span id="t55" style="left:58.30px;position:absolute;top:760.14px;font-size:13.66px;line-height:1;white-space:nowrap;color:#e5e7eb;-webkit-text-stroke:0.3px #e5e7eb;font-weight:400;font-family:'Liberation Sans', sans-serif;transform:scaleX(0.9089);transform-origin:0 0;">Seed</span>
<div style="position:absolute;left:58px;top:775px;width:716px;height:42px;background:#1f2937;border:1px solid #374151;border-radius:8px;box-sizing:border-box;"></div>
<span id="t56" style="left:69.00px;position:absolute;top:789.74px;font-size:13.66px;line-height:1;white-space:nowrap;color:#e5e7eb;-webkit-text-stroke:0.3px #e5e7eb;font-weight:400;font-family:'Liberation Sans', sans-serif;transform:scaleX(0.9049);transform-origin:0 0;">-1</span>
<div style="position:absolute;left:745px;top:787px;width:18px;height:18px;background:#e9e8ed;border-radius:0px;box-sizing:border-box;"></div>
<svg style="position:absolute;left:745px;top:787px;" width="18" height="18" viewBox="0 0 18 18"><path d="M5.3 6.8L9 3.1l3.7 3.7M5.3 11.1L9 14.8l3.7-3.7" fill="none" stroke="#8f8f9d" stroke-width="1.5"/></svg>
<div style="position:absolute;left:790px;top:779px;width:35px;height:38px;background:linear-gradient(to bottom right,#4b5563,#374151);border-radius:8px;box-sizing:border-box;box-shadow:inset 0 0 0 1px #525b69;"></div>
<svg style="position:absolute;left:798px;top:789px;" width="19" height="19" viewBox="0 0 19 19"><path d="M9.5 1L17.5 5v9L9.5 18 1.5 14V5z" fill="#e9e6f0"/><path d="M1.5 5L9.5 9l8-4M9.5 9v9" stroke="#c9c3d6" stroke-width="0.8" fill="none"/><circle cx="9.5" cy="5" r="1.2" fill="#e0405a"/><circle cx="4" cy="9" r="1" fill="#5b3c9e"/><circle cx="6.5" cy="13" r="1" fill="#5b3c9e"/><circle cx="12.5" cy="11" r="1" fill="#5b3c9e"/><circle cx="15" cy="8.5" r="1" fill="#5b3c9e"/><circle cx="14" cy="14" r="1" fill="#5b3c9e"/></svg>
<div style="position:absolute;left:841px;top:779px;width:35px;height:38px;background:linear-gradient(to bottom right,#4b5563,#374151);border-radius:8px;box-sizing:border-box;box-shadow:inset 0 0 0 1px #525b69;"></div>
<svg style="position:absolute;left:848px;top:788px;" width="20" height="20" viewBox="0 0 20 20"><g fill="none" stroke-width="2.6" stroke-linejoin="round"><path d="M6.2 9.5L9 4.8c.5-.8 1.5-.8 2 0l1.6 2.7" stroke="#47d39b"/><path d="M14.6 10.2l2.2 3.8c.5.8-.1 1.8-1 1.8H12" stroke="#2fa676"/><path d="M7.8 15.8H4.2c-.9 0-1.5-1-1-1.8l1.4-2.4" stroke="#3ec28f"/></g><path d="M10.8 8.2l4.6-.6-1.8 4.2z" fill="#47d39b"/><path d="M12.6 13.2v5l-3.4-2.5z" fill="#2fa676"/><path d="M2.6 10.6l4.2 1.9 1-3.9z" fill="#3ec28f"/></svg>
<div style="position:absolute;left:892px;top:789px;width:16px;height:16px;background:#1f2937;border:1px solid #374151;border-radius:4px;box-sizing:border-box;"></div>
<span id="t57" style="left:916.00px;position:absolute;top:790.64px;font-size:13.66px;line-height:1;white-space:nowrap;color:#e5e7eb;-webkit-text-stroke:0.3px #e5e7eb;font-weight:400;font-family:'Liberation Sans', sans-serif;transform:scaleX(0.8941);transform-origin:0 0;">Extra</span>
<div style="position:absolute;left:58px;top:826px;width:894px;height:135px;background:transparent;border:1px solid #374151;border-radius:8px;box-sizing:border-box;"></div>
<span id="t58" style="left:67.10px;position:absolute;top:838.25px;font-size:16.72px;line-height:1;white-space:nowrap;color:#e5e7eb;-webkit-text-stroke:0.3px #e5e7eb;font-weight:400;font-family:'Liberation Sans', sans-serif;transform:scaleX(0.8895);transform-origin:0 0;">Aspect Ratio and Resolution Buttons</span>
<svg style="position:absolute;left:929px;top:840px;" width="12" height="11" viewBox="0 0 12 11"><path d="M0 0.5h12L6 10.5z" fill="#f3f4f6"/></svg>
<div style="position:absolute;left:67px;top:867px;width:40px;height:38px;background:linear-gradient(to bottom right,#4b5563,#374151);border-radius:8px;box-sizing:border-box;box-shadow:inset 0 0 0 1px #525b69;"></div>
<div style="position:absolute;left:115px;top:867px;width:40px;height:38px;background:linear-gradient(to bottom right,#4b5563,#374151);border-radius:8px;box-sizing:border-box;box-shadow:inset 0 0 0 1px #525b69;"></div>
<div style="position:absolute;left:67px;top:910px;width:40px;height:39px;background:linear-gradient(to bottom right,#4b5563,#374151);border-radius:8px;box-sizing:border-box;box-shadow:inset 0 0 0 1px #525b69;"></div>
<div style="position:absolute;left:115px;top:910px;width:40px;height:39px;background:linear-gradient(to bottom right,#4b5563,#374151);border-radius:8px;box-sizing:border-box;box-shadow:inset 0 0 0 1px #525b69;"></div>
<div style="position:absolute;left:163px;top:867px;width:123px;height:38px;background:linear-gradient(to bottom right,#4b5563,#374151);border-radius:8px;box-sizing:border-box;box-shadow:inset 0 0 0 1px #525b69;"></div>
<span id="t59" style="left:214.60px;position:absolute;top:879.5px;font-size:15.12px;line-height:1;white-space:nowrap;color:#f3f4f6;-webkit-text-stroke:0px #f3f4f6;font-weight:700;font-family:'Liberation Sans', sans-serif;transform:scaleX(0.9064);transform-origin:0 0;">1:1</span>
<div style="position:absolute;left:163px;top:910px;width:123px;height:39px;background:linear-gradient(to bottom right,#4b5563,#374151);border-radius:8px;box-sizing:border-box;box-shadow:inset 0 0 0 1px #525b69;"></div>
<span id="t60" style="left:212.30px;position:absolute;top:923.4px;font-size:15.12px;line-height:1;white-space:nowrap;color:#f3f4f6;-webkit-text-stroke:0px #f3f4f6;font-weight:700;font-family:'Liberation Sans', sans-serif;transform:scaleX(0.9675);transform-origin:0 0;">512</span>
<div style="position:absolute;left:294px;top:867px;width:124px;height:38px;background:linear-gradient(to bottom right,#4b5563,#374151);border-radius:8px;box-sizing:border-box;box-shadow:inset 0 0 0 1px #525b69;"></div>
<span id="t61" style="left:346.10px;position:absolute;top:879.5px;font-size:15.12px;line-height:1;white-space:nowrap;color:#f3f4f6;-webkit-text-stroke:0px #f3f4f6;font-weight:700;font-family:'Liberation Sans', sans-serif;transform:scaleX(0.9064);transform-origin:0 0;">4:3</span>
<div style="position:absolute;left:294px;top:910px;width:124px;height:39px;background:linear-gradient(to bottom right,#4b5563,#374151);border-radius:8px;box-sizing:border-box;box-shadow:inset 0 0 0 1px #525b69;"></div>
<span id="t62" style="left:343.80px;position:absolute;top:923.4px;font-size:15.12px;line-height:1;white-space:nowrap;color:#f3f4f6;-webkit-text-stroke:0px #f3f4f6;font-weight:700;font-family:'Liberation Sans', sans-serif;transform:scaleX(0.9675);transform-origin:0 0;">768</span>
<div style="position:absolute;left:426px;top:867px;width:123px;height:38px;background:linear-gradient(to bottom right,#4b5563,#374151);border-radius:8px;box-sizing:border-box;box-shadow:inset 0 0 0 1px #525b69;"></div>
<span id="t63" style="left:477.60px;position:absolute;top:879.5px;font-size:15.12px;line-height:1;white-space:nowrap;color:#f3f4f6;-webkit-text-stroke:0px #f3f4f6;font-weight:700;font-family:'Liberation Sans', sans-serif;transform:scaleX(0.9064);transform-origin:0 0;">3:2</span>
<div style="position:absolute;left:426px;top:910px;width:123px;height:39px;background:linear-gradient(to bottom right,#4b5563,#374151);border-radius:8px;box-sizing:border-box;box-shadow:inset 0 0 0 1px #525b69;"></div>
<span id="t64" style="left:471.75px;position:absolute;top:923.4px;font-size:15.12px;line-height:1;white-space:nowrap;color:#f3f4f6;-webkit-text-stroke:0px #f3f4f6;font-weight:700;font-family:'Liberation Sans', sans-serif;transform:scaleX(0.9368);transform-origin:0 0;">1024</span>
<div style="position:absolute;left:557px;top:867px;width:123px;height:38px;background:linear-gradient(to bottom right,#4b5563,#374151);border-radius:8px;box-sizing:border-box;box-shadow:inset 0 0 0 1px #525b69;"></div>
<span id="t65" style="left:608.60px;position:absolute;top:879.5px;font-size:15.12px;line-height:1;white-space:nowrap;color:#f3f4f6;-webkit-text-stroke:0px #f3f4f6;font-weight:700;font-family:'Liberation Sans', sans-serif;transform:scaleX(0.9064);transform-origin:0 0;">8:5</span>
<div style="position:absolute;left:557px;top:910px;width:123px;height:39px;background:linear-gradient(to bottom right,#4b5563,#374151);border-radius:8px;box-sizing:border-box;box-shadow:inset 0 0 0 1px #525b69;"></div>
<span id="t66" style="left:602.75px;position:absolute;top:923.4px;font-size:15.12px;line-height:1;white-space:nowrap;color:#f3f4f6;-webkit-text-stroke:0px #f3f4f6;font-weight:700;font-family:'Liberation Sans', sans-serif;transform:scaleX(0.9368);transform-origin:0 0;">1280</span>
<div style="position:absolute;left:688px;top:867px;width:124px;height:38px;background:linear-gradient(to bottom right,#4b5563,#374151);border-radius:8px;box-sizing:border-box;box-shadow:inset 0 0 0 1px #525b69;"></div>
<span id="t67" style="left:737.00px;position:absolute;top:879.5px;font-size:15.12px;line-height:1;white-space:nowrap;color:#f3f4f6;-webkit-text-stroke:0px #f3f4f6;font-weight:700;font-family:'Liberation Sans', sans-serif;transform:scaleX(0.8595);transform-origin:0 0;">16:9</span>
<div style="position:absolute;left:688px;top:910px;width:124px;height:39px;background:linear-gradient(to bottom right,#4b5563,#374151);border-radius:8px;box-sizing:border-box;box-shadow:inset 0 0 0 1px #525b69;"></div>
<span id="t68" style="left:734.25px;position:absolute;top:923.4px;font-size:15.12px;line-height:1;white-space:nowrap;color:#f3f4f6;-webkit-text-stroke:0px #f3f4f6;font-weight:700;font-family:'Liberation Sans', sans-serif;transform:scaleX(0.9368);transform-origin:0 0;">1536</span>
<div style="position:absolute;left:820px;top:867px;width:123px;height:38px;background:linear-gradient(to bottom right,#4b5563,#374151);border-radius:8px;box-sizing:border-box;box-shadow:inset 0 0 0 1px #525b69;"></div>
<span id="t69" style="left:868.50px;position:absolute;top:879.5px;font-size:15.12px;line-height:1;white-space:nowrap;color:#f3f4f6;-webkit-text-stroke:0px #f3f4f6;font-weight:700;font-family:'Liberation Sans', sans-serif;transform:scaleX(0.8595);transform-origin:0 0;">21:9</span>
<div style="position:absolute;left:820px;top:910px;width:123px;height:39px;background:linear-gradient(to bottom right,#4b5563,#374151);border-radius:8px;box-sizing:border-box;box-shadow:inset 0 0 0 1px #525b69;"></div>
<span id="t70" style="left:865.75px;position:absolute;top:923.4px;font-size:15.12px;line-height:1;white-space:nowrap;color:#f3f4f6;-webkit-text-stroke:0px #f3f4f6;font-weight:700;font-family:'Liberation Sans', sans-serif;transform:scaleX(0.9368);transform-origin:0 0;">2048</span>
<svg style="position:absolute;left:77px;top:876px;" width="20" height="20" viewBox="0 0 20 20"><rect x="1.5" y="8" width="12" height="10" rx="1.5" fill="#f6a623"/><path d="M10 8V5a3.5 3.5 0 0 1 7 0v1.5" fill="none" stroke="#c9ccd3" stroke-width="1.6"/><circle cx="7.5" cy="12" r="1.3" fill="#5a3a10"/><path d="M7.5 12v3" stroke="#5a3a10" stroke-width="1.2"/></svg>
<svg style="position:absolute;left:125px;top:880px;" width="20" height="13" viewBox="0 0 20 13"><rect x="1.5" y="1.5" width="17" height="10" fill="none" stroke="#fff" stroke-width="2"/></svg>
<svg style="position:absolute;left:82px;top:920px;" width="10" height="18" viewBox="0 0 10 18"><circle cx="5" cy="4" r="1.8" fill="#fff"/><rect x="3.3" y="7" width="3.4" height="8" fill="#fff"/></svg>
<svg style="position:absolute;left:126px;top:920px;" width="18" height="18" viewBox="0 0 18 18"><path d="M5 2v13M2 11.5L5 15.5 8 11.5M13 16V3M10 6.5L13 2.5 16 6.5" fill="none" stroke="#fff" stroke-width="2.3"/></svg>
<div style="position:absolute;left:58px;top:966px;width:894px;height:40px;background:transparent;border:1px solid #374151;border-radius:8px;box-sizing:border-box;"></div>
<span id="t71" style="left:67.10px;position:absolute;top:979.66px;font-size:15.99px;line-height:1;white-space:nowrap;color:#e5e7eb;-webkit-text-stroke:0.3px #e5e7eb;font-weight:400;font-family:'Liberation Sans', sans-serif;transform:scaleX(0.9488);transform-origin:0 0;">ControlNet Integrated</span>
<svg style="position:absolute;left:929px;top:980px;" width="12" height="12" viewBox="0 0 12 12"><path d="M0 6L11.5 0.5v11z" fill="#f3f4f6"/></svg>
<div style="position:absolute;left:58px;top:1012px;width:894px;height:48px;background:transparent;border:1px solid #374151;border-radius:8px;box-sizing:border-box;"></div>
<span id="t72" style="left:67.10px;position:absolute;top:1025.66px;font-size:15.99px;line-height:1;white-space:nowrap;color:#e5e7eb;-webkit-text-stroke:0.3px #e5e7eb;font-weight:400;font-family:'Liberation Sans', sans-serif;transform:scaleX(0.9202);transform-origin:0 0;">DynamicThresholding (CFG-Fix) Integrated</span>
<svg style="position:absolute;left:929px;top:1026px;" width="12" height="12" viewBox="0 0 12 12"><path d="M0 6L11.5 0.5v11z" fill="#f3f4f6"/></svg>
<div style="position:absolute;left:960px;top:482px;width:0;height:560px;border-left:1px dashed #4b5563;"></div>
<div style="position:absolute;left:968px;top:482px;width:894px;height:618px;background:#111827;border-radius:8px;box-sizing:border-box;"></div>
<div style="position:absolute;left:976px;top:490px;width:878px;height:450px;background:#0e121c;border-radius:0px;box-sizing:border-box;"></div>
<div style="position:absolute;left:1009px;top:500px;width:164px;height:213px;background:#15181f;filter:blur(6px);"></div>
<div style="position:absolute;left:1010px;top:500px;width:164px;height:213px;filter:blur(8px);background:radial-gradient(ellipse 14px 28px at 22px 110px,#1f1d1a,transparent),radial-gradient(ellipse 30px 14px at 95px 128px,#1c1719,transparent),radial-gradient(ellipse 40px 50px at 100px 60px,#191c22,transparent);"></div>
<svg style="position:absolute;left:1263px;top:490px;" width="304" height="390" viewBox="0 0 304 390"><defs>
<filter id="sf" x="-2%" y="-2%" width="104%" height="104%"><feGaussianBlur stdDeviation="0.9"/><feColorMatrix type="saturate" values="0.95"/></filter>
<linearGradient id="wall" x1="0" y1="0" x2="1" y2="0"><stop offset="0" stop-color="#9a8a74"/><stop offset="0.3" stop-color="#b7a68a"/><stop offset="0.7" stop-color="#c2b298"/><stop offset="1" stop-color="#c9bba3"/></linearGradient>
<linearGradient id="walk" x1="0" y1="0" x2="0" y2="1"><stop offset="0" stop-color="#9a9792"/><stop offset="1" stop-color="#aaa6a0"/></linearGradient>
<linearGradient id="gl1" x1="0" y1="0" x2="0" y2="1"><stop offset="0" stop-color="#977a5c"/><stop offset="0.5" stop-color="#a28669"/><stop offset="1" stop-color="#6e5642"/></linearGradient>
<linearGradient id="gl2" x1="0" y1="0" x2="0" y2="1"><stop offset="0" stop-color="#7e6146"/><stop offset="0.6" stop-color="#8c6e50"/><stop offset="1" stop-color="#56432f"/></linearGradient>
<linearGradient id="yel" x1="0" y1="0" x2="1" y2="1"><stop offset="0" stop-color="#e0b853"/><stop offset="1" stop-color="#cfa444"/></linearGradient>
<linearGradient id="red" x1="0" y1="0" x2="0" y2="1"><stop offset="0" stop-color="#d06c5c"/><stop offset="1" stop-color="#b84f44"/></linearGradient>
<linearGradient id="grn" x1="0" y1="0" x2="0" y2="1"><stop offset="0" stop-color="#658a7e"/><stop offset="1" stop-color="#4f7368"/></linearGradient>
</defs>
<rect width="304" height="390" fill="#a8987e"/>
<g filter="url(#sf)">
<rect width="304" height="390" fill="url(#wall)"/>
<!-- top facade -->
<rect x="34" y="0" width="210" height="36" fill="#bfae92"/>
<path d="M34 10 L230 2 L232 8 L36 16z" fill="#a9977c"/>
<rect x="232" y="0" width="60" height="24" fill="#cabca3"/>
<rect x="270" y="2" width="12" height="18" fill="#b5a68d"/>
<!-- left stone column -->
<rect x="0" y="0" width="35" height="160" fill="#9a8a75"/><rect x="2" y="66" width="30" height="40" fill="#8e7e69"/>
<rect x="4" y="40" width="26" height="20" fill="#a08f78"/>

<rect x="0" y="109" width="13" height="43" fill="#9e5a40"/>
<rect x="2" y="114" width="9" height="24" fill="#6a3226"/>
<!-- left lighter wall -->
<rect x="35" y="90" width="45" height="125" fill="#a8957a"/>
<rect x="42" y="120" width="12" height="30" fill="#b9a78a"/>
<rect x="58" y="122" width="14" height="28" fill="#b3a185"/>
<rect x="42" y="160" width="14" height="40" fill="#9d8a70"/>
<path d="M34.6 90 L65.6 88 L66 113 L36 115z" fill="#1e1c1a"/>
<!-- upper-left awning -->
<path d="M11.6 66 L95 56 L95 92 L34 94 L12 93z" fill="#445a50"/>
<path d="M40 70 L95 66 L95 80 L40 84z" fill="#6c6a5e" opacity="0.6"/>
<path d="M32 37.6 L80 29.4 L95 33.7 L96 56.5 L23.7 67.7z" fill="url(#grn)"/>
<path d="M23.7 65 L96 54 L96 57 L23.7 68.5z" fill="#3f6457"/>
<path d="M96 38 L104 46 L127 58 L121 62 L96 57z" fill="#557f71"/>
<path d="M0 24 L30 24 L34 30 L33 37 L0 38z" fill="#3f5e52"/>
<!-- bay window body -->
<path d="M79 40 L95 34 L190 18 L225 20 L292 53 L285 62 L285 146 L79 142z" fill="#3d5a4f"/>
<rect x="85" y="55" width="23" height="78" fill="url(#gl2)"/>
<rect x="112" y="48" width="21" height="83" fill="url(#gl1)"/>
<rect x="135" y="44" width="27" height="86" fill="url(#gl1)"/>
<rect x="178" y="42" width="33" height="92" fill="url(#gl1)"/>
<rect x="215" y="48" width="21" height="88" fill="#9c8266"/>
<rect x="238" y="76" width="25" height="26" fill="#94785c"/>
<rect x="238" y="106" width="25" height="36" fill="#b09a80"/>
<rect x="265" y="66" width="17" height="76" fill="#a89278"/>
<rect x="88" y="60" width="14" height="20" fill="#6e5c4a"/>
<rect x="115" y="98" width="14" height="24" fill="#7a6450"/>
<rect x="140" y="60" width="18" height="18" fill="#c2ae90"/>
<rect x="182" y="96" width="22" height="30" fill="#bca98e"/>
<rect x="182" y="50" width="14" height="14" fill="#7e6a56"/>
<rect x="244" y="110" width="16" height="22" fill="#c4b49c"/>
<path d="M112 80h50M178 87h58M85 96h23M238 102h26" stroke="#3d5a4f" stroke-width="2"/>
<rect x="162" y="45" width="14" height="90" fill="#4a6c60"/>
<rect x="146" y="104" width="12" height="16" fill="#2a2c2e"/>
<rect x="153" y="68" width="14" height="16" fill="#cdb694"/>
<rect x="222" y="44" width="30" height="16" fill="#6e5640"/>
<circle cx="200" cy="52" r="6" fill="#dcc59a"/>
<circle cx="250" cy="80" r="4.5" fill="#d9c299"/>
<!-- bay roof -->
<path d="M95 34 L190 18 L225 20 L292 53 L288 61 L226 30 L190 28 L100 44z" fill="#4b6c60"/>
<path d="M95 34 L104 34 L126 59 L118 60z" fill="#3f5e52"/>
<!-- flower box -->
<path d="M240 136 L252 130 L268 132 L282 140 L286 148 L244 150z" fill="#6a5a44"/>
<circle cx="248" cy="136" r="2.2" fill="#b85a40"/><circle cx="258" cy="132" r="2" fill="#c4603f"/><circle cx="268" cy="137" r="2.2" fill="#b0503a"/><circle cx="278" cy="141" r="2" fill="#c4603f"/><circle cx="254" cy="142" r="2" fill="#5e7050"/><circle cx="272" cy="145" r="2" fill="#5a6c4c"/>
<path d="M238 148 L290 150 L296 160 L288 162 L240 156z" fill="#4a6a5c"/>
<path d="M252 156 L284 158 L283 183 L252 182z" fill="#4d4d4a"/>
<!-- middle green panel & awning -->
<path d="M71 140 L116 134 L116 206 L71 210z" fill="#3b574b"/>
<rect x="91.4" y="152" width="10" height="20" fill="#b48a72"/>
<rect x="92.5" y="158" width="8" height="12" fill="#d0c6b6"/>
<path d="M114 136 L240 148 L254 173 L252 183 L114 170z" fill="url(#grn)"/>
<path d="M114 164 L250 176 L254 183 L114.5 171z" fill="#3f6357"/>
<!-- under middle awning -->
<rect x="114" y="170" width="128" height="44" fill="#2f443a"/>
<rect x="118" y="174" width="50" height="14" fill="#86684a"/>
<rect x="172" y="176" width="30" height="13" fill="#7a5e44"/>
<rect x="206" y="178" width="32" height="13" fill="#6e5440"/>
<rect x="127" y="192" width="70" height="18" fill="#8a6a4c"/>
<path d="M140 199h4M147 197v8M152 198h5v7M160 198v7h4M167 198h5" stroke="#cdb89a" stroke-width="1.4" fill="none"/>
<rect x="199" y="194" width="38" height="16" fill="#2e3530"/>
<rect x="103.6" y="178.8" width="12" height="24" fill="#7a5a44"/>
<!-- right facade -->
<rect x="242" y="184" width="62" height="170" fill="#c3b49c"/>
<rect x="243.7" y="190" width="9.5" height="162" fill="#bcae96"/>
<rect x="254" y="193" width="22" height="28" fill="#4f5048"/>
<rect x="256" y="195" width="18" height="24" fill="#d2c6b2"/>
<!-- yellow awning -->
<path d="M0 160 L15 161 L71 205 L70 214 L0 212z" fill="url(#yel)"/>
<path d="M0 208 L70 210 L70 214 L0 213z" fill="#b08630"/>
<!-- left dark door + pillar -->
<rect x="0" y="211" width="27" height="147" fill="#1f2723"/>
<rect x="3" y="224" width="19" height="126" fill="#28332d"/>
<rect x="5" y="290" width="5" height="4" fill="#d0d0d0"/>
<rect x="26.5" y="212" width="16" height="145" fill="#c6b697"/>
<!-- left interior window -->
<rect x="42.4" y="236" width="24" height="78" fill="#86684a"/>
<rect x="46" y="250" width="16" height="40" fill="#94734f"/>
<rect x="65" y="232" width="18" height="122" fill="#3a5448"/>
<!-- storefront -->
<rect x="83" y="234" width="161" height="120" fill="#2f443a"/>
<rect x="87" y="240" width="13" height="76" fill="url(#gl2)"/>
<rect x="103" y="240" width="27" height="12" fill="#8f7050"/>
<rect x="103" y="256" width="12" height="62" fill="url(#gl1)"/>
<rect x="117" y="256" width="12" height="62" fill="url(#gl2)"/>
<rect x="135" y="240" width="20" height="12" fill="#8c6e52"/>
<rect x="135" y="258" width="20" height="62" fill="url(#gl1)"/>
<rect x="157" y="242" width="29" height="76" fill="url(#gl1)"/>
<rect x="188" y="242" width="23" height="14" fill="#856a4e"/>
<rect x="188" y="260" width="23" height="58" fill="url(#gl2)"/>
<rect x="213" y="244" width="26" height="14" fill="#8c6e52"/>
<rect x="218" y="262" width="18" height="58" fill="#a88c6c"/>
<rect x="142" y="292" width="6" height="14" fill="#e0e0dc"/>
<rect x="121" y="286" width="6" height="10" fill="#d8d8d4"/>
<!-- lower green awning left -->
<path d="M42.4 227 L75 212 L120 206 L120 224 L116 237 L42.4 237z" fill="#4b6d5f"/>
<path d="M42.4 233 L116 233 L116 237 L42.4 237z" fill="#3a5a4e"/>
<!-- red awning -->
<path d="M116 226 L128 210 L244 218 L298 239 L298 247 L116 234z" fill="url(#red)"/>
<path d="M116 231 L298 244 L298 247 L116 234z" fill="#a84439"/>
<!-- right door -->
<rect x="254" y="250" width="21" height="97" fill="#2a3630"/>
<rect x="259.5" y="268" width="10.5" height="46" fill="#7a6858"/>
<rect x="260.5" y="280" width="7" height="10" fill="#cfcac0"/><rect x="260.5" y="296" width="7" height="10" fill="#cfcac0"/>
<!-- chairs -->
<rect x="83" y="318" width="161" height="36" fill="#2b3d34"/>
<g stroke="#754629" stroke-width="2.3" fill="none" stroke-linecap="round"><path d="M44 353V325c0-6 10-6 10 0V353M44 333h10M46 333v20"/><path d="M56 356V328c0-6 10-6 10 0V356M56 336h10M58 336v20"/><path d="M70 356V328c0-6 10-6 10 0V356M70 336h10M72 336v20"/><path d="M84 353V325c0-6 10-6 10 0V353M84 333h10M86 333v20"/><path d="M96 354V326c0-6 10-6 10 0V354M96 334h10M98 334v20"/><path d="M108 356V328c0-6 10-6 10 0V356M108 336h10M110 336v20"/><path d="M150 355V327c0-6 10-6 10 0V355M150 335h10M152 335v20"/><path d="M162 356V328c0-6 10-6 10 0V356M162 336h10M164 336v20"/><path d="M176 352V324c0-6 10-6 10 0V352M176 332h10M178 332v20"/><path d="M190 356V328c0-6 10-6 10 0V356M190 336h10M192 336v20"/><path d="M204 352V324c0-6 10-6 10 0V352M204 332h10M206 332v20"/><path d="M218 355V327c0-6 10-6 10 0V355M218 335h10M220 335v20"/><path d="M232 354V326c0-6 10-6 10 0V354M232 334h10M234 334v20"/><path d="M276 348V326c0-6 10-6 10 0V348M276 334h10M278 334v14"/><path d="M288 348V326c0-6 10-6 10 0V348M288 334h10M290 334v14"/></g>
<path d="M60 322h34M168 322h30M206 322h28" stroke="#8c6a4c" stroke-width="2.2"/>
<!-- sidewalk -->
<path d="M0 355 L244 350 L304 346 L304 372 L0 383z" fill="url(#walk)"/>
<path d="M91 358.5 L144 357 L141 364 L94 365z" fill="#75736f"/>
<path d="M0 381 L304 369 L304 373 L0 386z" fill="#5f5d5a"/>
<path d="M0 385 L304 372 L304 390 L0 390z" fill="#7a7874"/>
</g>
</svg>
<svg style="position:absolute;left:1402px;top:896px;" width="26" height="33" viewBox="0 0 304 390" preserveAspectRatio="none"><defs>
<filter id="sfT" x="-2%" y="-2%" width="104%" height="104%"><feGaussianBlur stdDeviation="0.9"/><feColorMatrix type="saturate" values="0.95"/></filter>
<linearGradient id="wallT" x1="0" y1="0" x2="1" y2="0"><stop offset="0" stop-color="#9a8a74"/><stop offset="0.3" stop-color="#b7a68a"/><stop offset="0.7" stop-color="#c2b298"/><stop offset="1" stop-color="#c9bba3"/></linearGradient>
<linearGradient id="walkT" x1="0" y1="0" x2="0" y2="1"><stop offset="0" stop-color="#9a9792"/><stop offset="1" stop-color="#aaa6a0"/></linearGradient>
<linearGradient id="gl1T" x1="0" y1="0" x2="0" y2="1"><stop offset="0" stop-color="#977a5c"/><stop offset="0.5" stop-color="#a28669"/><stop offset="1" stop-color="#6e5642"/></linearGradient>
<linearGradient id="gl2T" x1="0" y1="0" x2="0" y2="1"><stop offset="0" stop-color="#7e6146"/><stop offset="0.6" stop-color="#8c6e50"/><stop offset="1" stop-color="#56432f"/></linearGradient>
<linearGradient id="yelT" x1="0" y1="0" x2="1" y2="1"><stop offset="0" stop-color="#e0b853"/><stop offset="1" stop-color="#cfa444"/></linearGradient>
<linearGradient id="redT" x1="0" y1="0" x2="0" y2="1"><stop offset="0" stop-color="#d06c5c"/><stop offset="1" stop-color="#b84f44"/></linearGradient>
<linearGradient id="grnT" x1="0" y1="0" x2="0" y2="1"><stop offset="0" stop-color="#658a7e"/><stop offset="1" stop-color="#4f7368"/></linearGradient>
</defs>
<rect width="304" height="390" fill="#a8987e"/>
<g filter="url(#sfT)">
<rect width="304" height="390" fill="url(#wallT)"/>
<!-- top facade -->
<rect x="34" y="0" width="210" height="36" fill="#bfae92"/>
<path d="M34 10 L230 2 L232 8 L36 16z" fill="#a9977c"/>
<rect x="232" y="0" width="60" height="24" fill="#cabca3"/>
<rect x="270" y="2" width="12" height="18" fill="#b5a68d"/>
<!-- left stone column -->
<rect x="0" y="0" width="35" height="160" fill="#9a8a75"/><rect x="2" y="66" width="30" height="40" fill="#8e7e69"/>
<rect x="4" y="40" width="26" height="20" fill="#a08f78"/>

<rect x="0" y="109" width="13" height="43" fill="#9e5a40"/>
<rect x="2" y="114" width="9" height="24" fill="#6a3226"/>
<!-- left lighter wall -->
<rect x="35" y="90" width="45" height="125" fill="#a8957a"/>
<rect x="42" y="120" width="12" height="30" fill="#b9a78a"/>
<rect x="58" y="122" width="14" height="28" fill="#b3a185"/>
<rect x="42" y="160" width="14" height="40" fill="#9d8a70"/>
<path d="M34.6 90 L65.6 88 L66 113 L36 115z" fill="#1e1c1a"/>
<!-- upper-left awning -->
<path d="M11.6 66 L95 56 L95 92 L34 94 L12 93z" fill="#445a50"/>
<path d="M40 70 L95 66 L95 80 L40 84z" fill="#6c6a5e" opacity="0.6"/>
<path d="M32 37.6 L80 29.4 L95 33.7 L96 56.5 L23.7 67.7z" fill="url(#grnT)"/>
<path d="M23.7 65 L96 54 L96 57 L23.7 68.5z" fill="#3f6457"/>
<path d="M96 38 L104 46 L127 58 L121 62 L96 57z" fill="#557f71"/>
<path d="M0 24 L30 24 L34 30 L33 37 L0 38z" fill="#3f5e52"/>
<!-- bay window body -->
<path d="M79 40 L95 34 L190 18 L225 20 L292 53 L285 62 L285 146 L79 142z" fill="#3d5a4f"/>
<rect x="85" y="55" width="23" height="78" fill="url(#gl2T)"/>
<rect x="112" y="48" width="21" height="83" fill="url(#gl1T)"/>
<rect x="135" y="44" width="27" height="86" fill="url(#gl1T)"/>
<rect x="178" y="42" width="33" height="92" fill="url(#gl1T)"/>
<rect x="215" y="48" width="21" height="88" fill="#9c8266"/>
<rect x="238" y="76" width="25" height="26" fill="#94785c"/>
<rect x="238" y="106" width="25" height="36" fill="#b09a80"/>
<rect x="265" y="66" width="17" height="76" fill="#a89278"/>
<rect x="88" y="60" width="14" height="20" fill="#6e5c4a"/>
<rect x="115" y="98" width="14" height="24" fill="#7a6450"/>
<rect x="140" y="60" width="18" height="18" fill="#c2ae90"/>
<rect x="182" y="96" width="22" height="30" fill="#bca98e"/>
<rect x="182" y="50" width="14" height="14" fill="#7e6a56"/>
<rect x="244" y="110" width="16" height="22" fill="#c4b49c"/>
<path d="M112 80h50M178 87h58M85 96h23M238 102h26" stroke="#3d5a4f" stroke-width="2"/>
<rect x="162" y="45" width="14" height="90" fill="#4a6c60"/>
<rect x="146" y="104" width="12" height="16" fill="#2a2c2e"/>
<rect x="153" y="68" width="14" height="16" fill="#cdb694"/>
<rect x="222" y="44" width="30" height="16" fill="#6e5640"/>
<circle cx="200" cy="52" r="6" fill="#dcc59a"/>
<circle cx="250" cy="80" r="4.5" fill="#d9c299"/>
<!-- bay roof -->
<path d="M95 34 L190 18 L225 20 L292 53 L288 61 L226 30 L190 28 L100 44z" fill="#4b6c60"/>
<path d="M95 34 L104 34 L126 59 L118 60z" fill="#3f5e52"/>
<!-- flower box -->
<path d="M240 136 L252 130 L268 132 L282 140 L286 148 L244 150z" fill="#6a5a44"/>
<circle cx="248" cy="136" r="2.2" fill="#b85a40"/><circle cx="258" cy="132" r="2" fill="#c4603f"/><circle cx="268" cy="137" r="2.2" fill="#b0503a"/><circle cx="278" cy="141" r="2" fill="#c4603f"/><circle cx="254" cy="142" r="2" fill="#5e7050"/><circle cx="272" cy="145" r="2" fill="#5a6c4c"/>
<path d="M238 148 L290 150 L296 160 L288 162 L240 156z" fill="#4a6a5c"/>
<path d="M252 156 L284 158 L283 183 L252 182z" fill="#4d4d4a"/>
<!-- middle green panel & awning -->
<path d="M71 140 L116 134 L116 206 L71 210z" fill="#3b574b"/>
<rect x="91.4" y="152" width="10" height="20" fill="#b48a72"/>
<rect x="92.5" y="158" width="8" height="12" fill="#d0c6b6"/>
<path d="M114 136 L240 148 L254 173 L252 183 L114 170z" fill="url(#grnT)"/>
<path d="M114 164 L250 176 L254 183 L114.5 171z" fill="#3f6357"/>
<!-- under middle awning -->
<rect x="114" y="170" width="128" height="44" fill="#2f443a"/>
<rect x="118" y="174" width="50" height="14" fill="#86684a"/>
<rect x="172" y="176" width="30" height="13" fill="#7a5e44"/>
<rect x="206" y="178" width="32" height="13" fill="#6e5440"/>
<rect x="127" y="192" width="70" height="18" fill="#8a6a4c"/>
<path d="M140 199h4M147 197v8M152 198h5v7M160 198v7h4M167 198h5" stroke="#cdb89a" stroke-width="1.4" fill="none"/>
<rect x="199" y="194" width="38" height="16" fill="#2e3530"/>
<rect x="103.6" y="178.8" width="12" height="24" fill="#7a5a44"/>
<!-- right facade -->
<rect x="242" y="184" width="62" height="170" fill="#c3b49c"/>
<rect x="243.7" y="190" width="9.5" height="162" fill="#bcae96"/>
<rect x="254" y="193" width="22" height="28" fill="#4f5048"/>
<rect x="256" y="195" width="18" height="24" fill="#d2c6b2"/>
<!-- yellow awning -->
<path d="M0 160 L15 161 L71 205 L70 214 L0 212z" fill="url(#yelT)"/>
<path d="M0 208 L70 210 L70 214 L0 213z" fill="#b08630"/>
<!-- left dark door + pillar -->
<rect x="0" y="211" width="27" height="147" fill="#1f2723"/>
<rect x="3" y="224" width="19" height="126" fill="#28332d"/>
<rect x="5" y="290" width="5" height="4" fill="#d0d0d0"/>
<rect x="26.5" y="212" width="16" height="145" fill="#c6b697"/>
<!-- left interior window -->
<rect x="42.4" y="236" width="24" height="78" fill="#86684a"/>
<rect x="46" y="250" width="16" height="40" fill="#94734f"/>
<rect x="65" y="232" width="18" height="122" fill="#3a5448"/>
<!-- storefront -->
<rect x="83" y="234" width="161" height="120" fill="#2f443a"/>
<rect x="87" y="240" width="13" height="76" fill="url(#gl2T)"/>
<rect x="103" y="240" width="27" height="12" fill="#8f7050"/>
<rect x="103" y="256" width="12" height="62" fill="url(#gl1T)"/>
<rect x="117" y="256" width="12" height="62" fill="url(#gl2T)"/>
<rect x="135" y="240" width="20" height="12" fill="#8c6e52"/>
<rect x="135" y="258" width="20" height="62" fill="url(#gl1T)"/>
<rect x="157" y="242" width="29" height="76" fill="url(#gl1T)"/>
<rect x="188" y="242" width="23" height="14" fill="#856a4e"/>
<rect x="188" y="260" width="23" height="58" fill="url(#gl2T)"/>
<rect x="213" y="244" width="26" height="14" fill="#8c6e52"/>
<rect x="218" y="262" width="18" height="58" fill="#a88c6c"/>
<rect x="142" y="292" width="6" height="14" fill="#e0e0dc"/>
<rect x="121" y="286" width="6" height="10" fill="#d8d8d4"/>
<!-- lower green awning left -->
<path d="M42.4 227 L75 212 L120 206 L120 224 L116 237 L42.4 237z" fill="#4b6d5f"/>
<path d="M42.4 233 L116 233 L116 237 L42.4 237z" fill="#3a5a4e"/>
<!-- red awning -->
<path d="M116 226 L128 210 L244 218 L298 239 L298 247 L116 234z" fill="url(#redT)"/>
<path d="M116 231 L298 244 L298 247 L116 234z" fill="#a84439"/>
<!-- right door -->
<rect x="254" y="250" width="21" height="97" fill="#2a3630"/>
<rect x="259.5" y="268" width="10.5" height="46" fill="#7a6858"/>
<rect x="260.5" y="280" width="7" height="10" fill="#cfcac0"/><rect x="260.5" y="296" width="7" height="10" fill="#cfcac0"/>
<!-- chairs -->
<rect x="83" y="318" width="161" height="36" fill="#2b3d34"/>
<g stroke="#754629" stroke-width="2.3" fill="none" stroke-linecap="round"><path d="M44 353V325c0-6 10-6 10 0V353M44 333h10M46 333v20"/><path d="M56 356V328c0-6 10-6 10 0V356M56 336h10M58 336v20"/><path d="M70 356V328c0-6 10-6 10 0V356M70 336h10M72 336v20"/><path d="M84 353V325c0-6 10-6 10 0V353M84 333h10M86 333v20"/><path d="M96 354V326c0-6 10-6 10 0V354M96 334h10M98 334v20"/><path d="M108 356V328c0-6 10-6 10 0V356M108 336h10M110 336v20"/><path d="M150 355V327c0-6 10-6 10 0V355M150 335h10M152 335v20"/><path d="M162 356V328c0-6 10-6 10 0V356M162 336h10M164 336v20"/><path d="M176 352V324c0-6 10-6 10 0V352M176 332h10M178 332v20"/><path d="M190 356V328c0-6 10-6 10 0V356M190 336h10M192 336v20"/><path d="M204 352V324c0-6 10-6 10 0V352M204 332h10M206 332v20"/><path d="M218 355V327c0-6 10-6 10 0V355M218 335h10M220 335v20"/><path d="M232 354V326c0-6 10-6 10 0V354M232 334h10M234 334v20"/><path d="M276 348V326c0-6 10-6 10 0V348M276 334h10M278 334v14"/><path d="M288 348V326c0-6 10-6 10 0V348M288 334h10M290 334v14"/></g>
<path d="M60 322h34M168 322h30M206 322h28" stroke="#8c6a4c" stroke-width="2.2"/>
<!-- sidewalk -->
<path d="M0 355 L244 350 L304 346 L304 372 L0 383z" fill="url(#walkT)"/>
<path d="M91 358.5 L144 357 L141 364 L94 365z" fill="#75736f"/>
<path d="M0 381 L304 369 L304 373 L0 386z" fill="#5f5d5a"/>
<path d="M0 385 L304 372 L304 390 L0 390z" fill="#7a7874"/>
</g>
</svg>
<div style="position:absolute;left:1806px;top:494px;width:20px;height:20px;background:transparent;border:1px solid #4b5563;border-radius:4px;box-sizing:border-box;"></div>
<svg style="position:absolute;left:1806px;top:494px;" width="20" height="20" viewBox="0 0 20 20"><path d="M10 4v8M6.5 9L10 12.5 13.5 9M5 14h10" fill="none" stroke="#d1d5db" stroke-width="1.3"/></svg>
<div style="position:absolute;left:1830px;top:494px;width:20px;height:20px;background:transparent;border:1px solid #4b5563;border-radius:4px;box-sizing:border-box;"></div>
<svg style="position:absolute;left:1830px;top:494px;" width="20" height="20" viewBox="0 0 20 20"><path d="M5.5 5.5l9 9M14.5 5.5l-9 9" stroke="#d1d5db" stroke-width="1.3"/></svg>
<div style="position:absolute;left:1397px;top:894px;width:36px;height:36px;background:transparent;border:2px solid #f97316;border-radius:0px;box-sizing:border-box;"></div>
<div style="position:absolute;left:1244px;top:956px;width:35px;height:39px;background:linear-gradient(to bottom right,#4b5563,#374151);border-radius:8px;box-sizing:border-box;box-shadow:inset 0 0 0 1px #525b69;"></div>
<div style="position:absolute;left:1295px;top:956px;width:35px;height:39px;background:linear-gradient(to bottom right,#4b5563,#374151);border-radius:8px;box-sizing:border-box;box-shadow:inset 0 0 0 1px #525b69;"></div>
<div style="position:absolute;left:1346px;top:956px;width:35px;height:39px;background:linear-gradient(to bottom right,#4b5563,#374151);border-radius:8px;box-sizing:border-box;box-shadow:inset 0 0 0 1px #525b69;"></div>
<div style="position:absolute;left:1397px;top:956px;width:35px;height:39px;background:linear-gradient(to bottom right,#4b5563,#374151);border-radius:8px;box-sizing:border-box;box-shadow:inset 0 0 0 1px #525b69;"></div>
<div style="position:absolute;left:1449px;top:956px;width:35px;height:39px;background:linear-gradient(to bottom right,#4b5563,#374151);border-radius:8px;box-sizing:border-box;box-shadow:inset 0 0 0 1px #525b69;"></div>
<div style="position:absolute;left:1500px;top:956px;width:35px;height:39px;background:linear-gradient(to bottom right,#4b5563,#374151);border-radius:8px;box-sizing:border-box;box-shadow:inset 0 0 0 1px #525b69;"></div>
<div style="position:absolute;left:1551px;top:956px;width:35px;height:39px;background:linear-gradient(to bottom right,#4b5563,#374151);border-radius:8px;box-sizing:border-box;box-shadow:inset 0 0 0 1px #525b69;"></div>
<svg style="position:absolute;left:1253px;top:966px;" width="18" height="18" viewBox="0 0 18 18"><path d="M1 4h6l2 2h7v9H1z" fill="#f4b82e"/><path d="M3 8h15l-2 8H1z" fill="#ffd45c"/></svg>
<svg style="position:absolute;left:1304px;top:966px;" width="17" height="18" viewBox="0 0 17 18"><rect x="1" y="1" width="15" height="16" rx="2" fill="#5c4aa8"/><rect x="4" y="1" width="9" height="6" fill="#e8e4f2"/><rect x="3" y="10" width="11" height="7" fill="#e8e4f2"/><path d="M3 10h11" stroke="#e2405a" stroke-width="1.5"/></svg>
<svg style="position:absolute;left:1355px;top:966px;" width="17" height="18" viewBox="0 0 17 18"><rect x="1" y="6" width="15" height="11" rx="1.5" fill="#4f3f7e"/><rect x="1" y="2" width="15" height="7" rx="1" fill="#f6c33b"/><rect x="6" y="12" width="5" height="3" fill="#d8d2ea"/><path d="M3 5h4" stroke="#e2405a" stroke-width="1.3"/><circle cx="13" cy="2.5" r="2" fill="#4cc38a"/></svg>
<svg style="position:absolute;left:1406px;top:966px;" width="18" height="18" viewBox="0 0 18 18"><rect x="1" y="1" width="16" height="16" fill="#c9a06a"/><rect x="3" y="3" width="12" height="12" fill="#7ec8f0"/><path d="M3 12c3-3 6-3 12 0v3H3z" fill="#4caf50"/><circle cx="10.5" cy="6" r="1.5" fill="#ffb74d"/></svg>
<svg style="position:absolute;left:1457px;top:966px;" width="19" height="18" viewBox="0 0 19 18"><path d="M9 2C4 2 1 5.5 1 9.5S4 17 8 17c2 0 1.5-2.5 3-3s5 1 6-2.5C18 7 15 2 9 2z" fill="#f4b3a6"/><circle cx="5" cy="9" r="1.5" fill="#e94a8a"/><circle cx="6" cy="5.5" r="1.5" fill="#a25ee8"/><circle cx="10" cy="4.5" r="1.5" fill="#4a9ef0"/><circle cx="6" cy="13" r="1.5" fill="#3ab86e"/><circle cx="13.5" cy="9.5" r="1.8" fill="#2a2f3a"/></svg>
<svg style="position:absolute;left:1508px;top:966px;" width="18" height="18" viewBox="0 0 18 18"><path d="M2 1.5v15h15z" fill="#c4c0cc"/><path d="M5 9v4.5h4.5z" fill="#4a505c"/><path d="M3 2.5l13 13" stroke="#a98ee8" stroke-width="1" stroke-dasharray="1 1.2"/></svg>
<svg style="position:absolute;left:1559px;top:965px;" width="19" height="19" viewBox="0 0 19 19"><defs><linearGradient id="spk" x1="0" y1="0" x2="0" y2="1"><stop offset="0" stop-color="#fcc840"/><stop offset="1" stop-color="#f59040"/></linearGradient></defs><path d="M10.8 3.9000000000000004Q11.430000000000001 10.74 17.1 11.5Q11.430000000000001 12.26 10.8 19.1Q10.17 12.26 4.500000000000001 11.5Q10.17 10.74 10.8 3.9000000000000004z" fill="url(#spk)"/><path d="M5.1 4.1Q5.33 6.35 7.3999999999999995 6.6Q5.33 6.85 5.1 9.1Q4.869999999999999 6.85 2.8 6.6Q4.869999999999999 6.35 5.1 4.1z" fill="#f8bc3c"/><path d="M3.6 11.6Q3.88 14.66 6.4 15Q3.88 15.34 3.6 18.4Q3.3200000000000003 15.34 0.8000000000000003 15Q3.3200000000000003 14.66 3.6 11.6z" fill="#f59a48"/></svg>
<span id="t73" style="left:976.00px;position:absolute;top:1016.45px;font-size:12.94px;line-height:1;white-space:nowrap;color:#e5e7eb;-webkit-text-stroke:0.3px #e5e7eb;font-weight:400;font-family:'Liberation Sans', sans-serif;transform:scaleX(1.0126);transform-origin:0 0;">cafe art</span>
</body></html>
